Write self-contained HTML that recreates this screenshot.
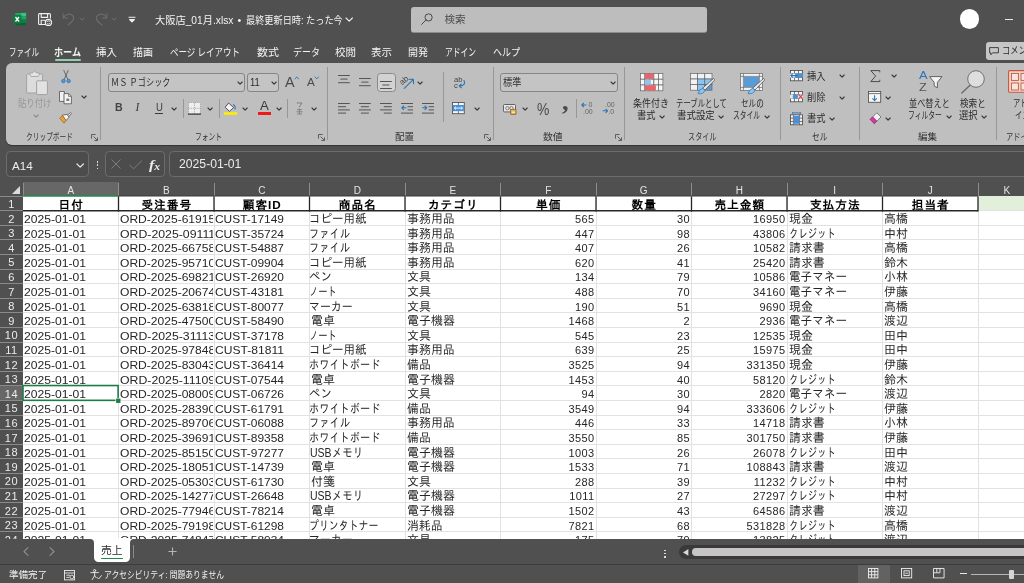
<!DOCTYPE html>
<html lang="ja"><head><meta charset="utf-8"><title>大阪店_01月.xlsx - Excel</title>
<style>
*{margin:0;padding:0;box-sizing:border-box}
html,body{width:1024px;height:583px;overflow:hidden;background:#505050;}
body{position:relative;background:transparent;will-change:transform;font-family:"Liberation Sans","Noto Sans CJK JP",sans-serif;font-size:10px;color:#f0f0f0;}
.a{position:absolute;white-space:nowrap}
.t{position:absolute;white-space:nowrap;line-height:1}
svg{position:absolute;overflow:visible}
.rib{left:6px;top:63px;width:1030px;height:82px;background:#bfbfbf;border-radius:6px 0 0 6px;box-shadow:0 1px 1px #333}
.rl{color:#3c3c3c;font-size:9.5px}
.rt{color:#2e2e2e;font-size:9.5px}
.gs{width:1px;background:#979797;top:67px;height:73px}
.ss{width:1px;background:#979797;top:99px;height:19px}
.box{border:1px solid #868686;border-radius:3px;background:#c4c4c4}
.cell{position:absolute;white-space:nowrap;overflow:hidden;font-family:"Liberation Sans","IPAGothic",sans-serif;font-size:11px;color:#262626;line-height:14.6px;height:14.6px}
.hd{font-weight:bold;text-align:center;font-size:11.7px;color:#000}
.num{text-align:right}
.rh{position:absolute;left:0;width:23px;text-align:center;color:#ececec;font-family:"Liberation Sans","IPAGothic",sans-serif;font-size:11px;line-height:14.6px;height:14.6px;letter-spacing:.6px}
.ch{position:absolute;top:182px;height:14px;text-align:center;color:#e4e4e4;font-size:10px;line-height:17px}
</style></head>
<body>
<svg style="left:13px;top:12px" width="14" height="14" viewBox="0 0 14 14">
<rect x="2.2" y="0.9" width="10.9" height="12.8" rx="0.9" fill="#21a366"/>
<rect x="8.1" y="0.9" width="5" height="3.2" fill="#33c481"/>
<rect x="8.1" y="4.1" width="5" height="3.2" fill="#21a366"/>
<rect x="8.1" y="7.3" width="5" height="3.2" fill="#107c41"/>
<path d="M2.2 10.5 H13.1 V12.8 Q13.1 13.7 12.2 13.7 H3.1 Q2.2 13.7 2.2 12.8 Z" fill="#185c37"/>
<rect x="2.2" y="4.1" width="5.9" height="6.4" fill="#107c41"/>
<rect x="0.1" y="3" width="8.3" height="8.5" rx="0.8" fill="#107c41"/>
<path d="M2.5 5 L6 9.5 M6 5 L2.5 9.5" stroke="#fff" stroke-width="1.25" fill="none"/>
</svg>
<svg style="left:38px;top:13px" width="14" height="13" viewBox="0 0 14 13" fill="none" stroke="#f2f2f2" stroke-width="1.1">
<path d="M8 11.5 H1.6 Q0.6 11.5 0.6 10.5 V1.6 Q0.6 0.6 1.6 0.6 H11.4 Q12.4 0.6 12.4 1.6 V5.5"/>
<path d="M3.2 0.6 V4.4 H9.6 V0.6"/>
<path d="M3.2 11.5 V7.2 H7"/>
<circle cx="10.4" cy="9.4" r="3.1" stroke-width="1.2" fill="#505050"/>
<path d="M8.9 9.2 A1.6 1.6 0 0 1 11.8 8.6 M11.9 9.8 A1.6 1.6 0 0 1 9 10.3" stroke-width="0.9"/>
</svg>
<svg style="left:62px;top:12px" width="14" height="14" viewBox="0 0 14 14" fill="none" stroke="#6e6e6e" stroke-width="1.05" stroke-linecap="round" stroke-linejoin="round">
<path d="M1.2 1.5 V6 H5.7"/><path d="M1.4 5.8 C3.5 2 8 1 10.6 3.6 C13.4 6.6 10.5 9.5 6 13"/>
</svg>
<svg style="left:79.90px;top:18.10px" width="4.2" height="2.2"><path d="M0 0 L2.1 2.2 L4.2 0" fill="none" stroke="#6e6e6e" stroke-width="1" stroke-linecap="round" stroke-linejoin="round"/></svg>
<svg style="left:94px;top:12px" width="14" height="14" viewBox="0 0 14 14" fill="none" stroke="#6e6e6e" stroke-width="1.05" stroke-linecap="round" stroke-linejoin="round">
<path d="M12.8 1.5 V6 H8.3"/><path d="M12.6 5.8 C10.5 2 6 1 3.4 3.6 C0.6 6.6 3.5 9.5 8 13"/>
</svg>
<svg style="left:111.70px;top:18.10px" width="4.2" height="2.2"><path d="M0 0 L2.1 2.2 L4.2 0" fill="none" stroke="#6e6e6e" stroke-width="1" stroke-linecap="round" stroke-linejoin="round"/></svg>
<svg style="left:128px;top:16px" width="8" height="7" viewBox="0 0 8 7" fill="none" stroke="#f0f0f0" stroke-width="1.1" stroke-linecap="round" stroke-linejoin="round"><path d="M1 1.2 H7"/><path d="M1.6 3.6 L4 5.8 L6.4 3.6 Z" fill="#f0f0f0"/></svg>
<div class="t " style="left:155px;top:14.50px;font-size:10.6px;color:#f4f4f4;transform:scaleX(0.9649);transform-origin:0 50%;">大阪店_01月.xlsx</div>
<div class="t " style="left:237.6px;top:14.55px;font-size:10.5px;color:#f4f4f4;">•</div>
<div class="t " style="left:246px;top:14.50px;font-size:10.6px;color:#f4f4f4;transform:scaleX(0.8656);transform-origin:0 50%;">最終更新日時: たった今</div>
<svg style="left:345.80px;top:18.40px" width="6.4" height="3.2"><path d="M0 0 L3.2 3.2 L6.4 0" fill="none" stroke="#f0f0f0" stroke-width="1.1" stroke-linecap="round" stroke-linejoin="round"/></svg>
<div class="a" style="left:410.5px;top:6.5px;width:296.5px;height:26px;background:#bdbdbd;border-radius:3px;border-bottom:1px solid #8c8c8c"></div>
<svg style="left:421px;top:13px" width="12" height="12" viewBox="0 0 12 12" fill="none" stroke="#4a4a4a" stroke-width="1"><circle cx="7.6" cy="4.4" r="3.6"/><path d="M5 7 L0.6 11.4" stroke-linecap="round"/></svg>
<div class="t " style="left:444.5px;top:14.35px;font-size:10.5px;color:#4c4c4c;">検索</div>
<div class="a" style="left:959.7px;top:9.3px;width:19.6px;height:19.6px;border-radius:50%;background:#fff"></div>
<div class="a" style="left:1004.5px;top:18.5px;width:8px;height:1.2px;background:#e8e8e8"></div>
<div class="t " style="left:9px;top:46.85px;font-size:10.7px;color:#f4f4f4;transform:scaleX(0.7015);transform-origin:0 50%;">ファイル</div>
<div class="t " style="left:54px;top:46.85px;font-size:10.7px;color:#f4f4f4;font-weight:bold;transform:scaleX(0.8504);transform-origin:0 50%;">ホーム</div>
<div class="t " style="left:96px;top:46.85px;font-size:10.7px;color:#f4f4f4;transform:scaleX(0.9817);transform-origin:0 50%;">挿入</div>
<div class="t " style="left:133px;top:46.85px;font-size:10.7px;color:#f4f4f4;transform:scaleX(0.9350);transform-origin:0 50%;">描画</div>
<div class="t " style="left:170px;top:46.85px;font-size:10.7px;color:#f4f4f4;transform:scaleX(0.7931);transform-origin:0 50%;">ページ レイアウト</div>
<div class="t " style="left:257px;top:46.85px;font-size:10.7px;color:#f4f4f4;transform:scaleX(1.0285);transform-origin:0 50%;">数式</div>
<div class="t " style="left:293px;top:46.85px;font-size:10.7px;color:#f4f4f4;transform:scaleX(0.8417);transform-origin:0 50%;">データ</div>
<div class="t " style="left:335px;top:46.85px;font-size:10.7px;color:#f4f4f4;transform:scaleX(0.9817);transform-origin:0 50%;">校閲</div>
<div class="t " style="left:371px;top:46.85px;font-size:10.7px;color:#f4f4f4;transform:scaleX(0.9817);transform-origin:0 50%;">表示</div>
<div class="t " style="left:408px;top:46.85px;font-size:10.7px;color:#f4f4f4;transform:scaleX(0.9350);transform-origin:0 50%;">開発</div>
<div class="t " style="left:445px;top:46.85px;font-size:10.7px;color:#f4f4f4;transform:scaleX(0.7249);transform-origin:0 50%;">アドイン</div>
<div class="t " style="left:493px;top:46.85px;font-size:10.7px;color:#f4f4f4;transform:scaleX(0.8417);transform-origin:0 50%;">ヘルプ</div>
<div class="a" style="left:54.5px;top:58.8px;width:26.5px;height:1.8px;background:#8fd0ae;border-radius:1px"></div>
<div class="a" style="left:985.5px;top:42px;width:50px;height:18px;background:#c6c6c6;border-radius:3px"></div>
<svg style="left:989px;top:46.6px" width="10" height="8.5" viewBox="0 0 10 8.5" fill="none" stroke="#333" stroke-width="0.9" stroke-linejoin="round"><path d="M0.6 0.6 H9.4 V5.8 H3.6 L1.8 7.8 V5.8 H0.6 Z"/></svg>
<div class="t " style="left:1001.5px;top:46.20px;font-size:10px;color:#2a2a2a;transform:scaleX(0.8250);transform-origin:0 50%;">コメント</div>
<div class="a rib"></div>
<svg style="left:26px;top:70.5px" width="22" height="24" viewBox="0 0 22 24" ><rect x="0.6" y="3" width="16" height="19" rx="1" fill="#dcdcdc" stroke="#a2a2a2" stroke-width="1"/>
<path d="M3.8 3.2 V2 H6.6 L8.6 0.3 L10.6 2 H13.4 V3.2 L12.2 5.4 H5 Z" fill="#e8e8e8" stroke="#a2a2a2" stroke-width="0.9" stroke-linejoin="round"/>
<rect x="10.6" y="9.8" width="10.8" height="13.8" rx="0.6" fill="#e2e2e2" stroke="#a2a2a2" stroke-width="1"/></svg>
<div class="t " style="left:18.2px;top:99.00px;font-size:10.4px;color:#979797;transform:scaleX(0.8036);transform-origin:0 50%;">貼り付け</div>
<svg style="left:33.90px;top:114.95px" width="4.2" height="2.1"><path d="M0 0 L2.1 2.1 L4.2 0" fill="none" stroke="#8c8c8c" stroke-width="1.1" stroke-linecap="round" stroke-linejoin="round"/></svg>
<svg style="left:61px;top:70px" width="10" height="13.5" viewBox="0 0 10 13.5" ><path d="M2.8 0.4 L6.8 9.4 M7.2 0.4 L3.2 9.4" stroke="#5a5a5a" stroke-width="0.85" fill="none" stroke-linecap="round"/>
<circle cx="2.4" cy="11" r="1.7" fill="#5b9bd5" stroke="#2e75b6" stroke-width="0.9"/><circle cx="7.6" cy="11" r="1.7" fill="#5b9bd5" stroke="#2e75b6" stroke-width="0.9"/></svg>
<svg style="left:59.4px;top:90.8px" width="13" height="13.4" viewBox="0 0 13 13.4" ><path d="M0.5 0.5 H5.4 V10.4 H0.5 Z" fill="#f2f2f2" stroke="#505050" stroke-width="0.8"/>
<path d="M5 2.6 H9.8 L12.4 5.2 V12.8 H5 Z" fill="#f2f2f2" stroke="#505050" stroke-width="0.8" stroke-linejoin="round"/><path d="M9.6 2.8 V5.4 H12.2" fill="none" stroke="#505050" stroke-width="0.7"/>
<rect x="7.4" y="7.6" width="2.8" height="2.4" fill="#777"/></svg>
<svg style="left:82.40px;top:96.15px" width="4.2" height="2.1"><path d="M0 0 L2.1 2.1 L4.2 0" fill="none" stroke="#383838" stroke-width="1.15" stroke-linecap="round" stroke-linejoin="round"/></svg>
<svg style="left:59.4px;top:111.6px" width="13" height="12" viewBox="0 0 13 12" ><path d="M8.2 3.2 L11.6 0.6 L12.4 1.6 L9.6 4.8 Z" fill="#f0f0f0" stroke="#555" stroke-width="0.8"/>
<path d="M3.2 3.2 L8.2 2.4 L10 5.2 L7 8.6 Z" fill="#f4f4f4" stroke="#555" stroke-width="0.8" stroke-linejoin="round"/>
<path d="M0.8 6.4 L3.4 3.6 L7 8.4 L5 11.2 Z" fill="#e8a33a" stroke="#a0691c" stroke-width="0.8" stroke-linejoin="round"/></svg>
<div class="t " style="left:25.5px;top:131.80px;font-size:9.6px;color:#333;transform:scaleX(0.6999);transform-origin:0 50%;">クリップボード</div>
<svg style="left:91px;top:133.8px" width="7" height="7" viewBox="0 0 7 7" ><path d="M0.5 4.6 V0.5 H4.6 M2.6 2.6 L6.2 6.2 M6.5 3.4 V6.5 H3.4" fill="none" stroke="#4a4a4a" stroke-width="0.85"/></svg>
<div class="a gs" style="left:100.3px"></div>
<div class="a box" style="left:107.5px;top:73.4px;width:137px;height:18.8px"></div>
<div class="t " style="left:110.8px;top:77.70px;font-size:9.8px;color:#2a2a2a;transform:scaleX(0.8344);transform-origin:0 50%;">ＭＳ Ｐゴシック</div>
<svg style="left:238.10px;top:81.85px" width="4.2" height="2.1"><path d="M0 0 L2.1 2.1 L4.2 0" fill="none" stroke="#383838" stroke-width="1.15" stroke-linecap="round" stroke-linejoin="round"/></svg>
<div class="a box" style="left:247.4px;top:73.4px;width:31.2px;height:18.8px"></div>
<div class="t " style="left:250.4px;top:77.45px;font-size:10.5px;color:#2a2a2a;transform:scaleX(0.8986);transform-origin:0 50%;">11</div>
<svg style="left:271.80px;top:81.85px" width="4.2" height="2.1"><path d="M0 0 L2.1 2.1 L4.2 0" fill="none" stroke="#383838" stroke-width="1.15" stroke-linecap="round" stroke-linejoin="round"/></svg>
<div class="t " style="left:284.6px;top:74.80px;font-size:14px;color:#4a4a4a;transform:scaleX(1.0274);transform-origin:0 50%;">A</div>
<svg style="left:294.50px;top:77.30px" width="3.6" height="1.8"><path d="M0 1.8 L1.8 0 L3.6 1.8" fill="none" stroke="#2e75b6" stroke-width="1" stroke-linecap="round" stroke-linejoin="round"/></svg>
<div class="t " style="left:307.2px;top:77.05px;font-size:11.5px;color:#4a4a4a;transform:scaleX(1.0167);transform-origin:0 50%;">A</div>
<svg style="left:314.80px;top:77.30px" width="3.6" height="1.8"><path d="M0 0 L1.8 1.8 L3.6 0" fill="none" stroke="#2e75b6" stroke-width="1" stroke-linecap="round" stroke-linejoin="round"/></svg>
<div class="t " style="left:114.9px;top:102.30px;font-size:10.6px;color:#444;font-weight:bold;">B</div>
<div class="t " style="left:135.6px;top:101.85px;font-size:11.5px;color:#3a3a3a;font-style:italic;font-family:'Liberation Serif',serif;">I</div>
<div class="t " style="left:155.6px;top:101.65px;font-size:11.5px;color:#3a3a3a;transform:scaleX(0.8301);transform-origin:0 50%;">U</div>
<div class="a" style="left:155.4px;top:113px;width:7.3px;height:1px;background:#3a3a3a"></div>
<svg style="left:172.20px;top:107.95px" width="4.2" height="2.1"><path d="M0 0 L2.1 2.1 L4.2 0" fill="none" stroke="#383838" stroke-width="1.15" stroke-linecap="round" stroke-linejoin="round"/></svg>
<div class="a ss" style="left:183.2px;top:99.4px;height:18.6px"></div>
<svg style="left:188.3px;top:101.6px" width="13" height="12.6" viewBox="0 0 13 12.6" ><rect x="0.5" y="0.5" width="12" height="11.6" fill="#eee" stroke="#999" stroke-width="0.8" stroke-dasharray="1.2 1"/>
<path d="M6.5 0.5 V12.1 M0.5 6.3 H12.5" stroke="#999" stroke-width="0.8" stroke-dasharray="1.2 1"/><path d="M0 12.1 H13" stroke="#333" stroke-width="1.2"/></svg>
<svg style="left:207.70px;top:107.95px" width="4.2" height="2.1"><path d="M0 0 L2.1 2.1 L4.2 0" fill="none" stroke="#383838" stroke-width="1.15" stroke-linecap="round" stroke-linejoin="round"/></svg>
<div class="a ss" style="left:218.8px;top:99.4px;height:18.6px"></div>
<svg style="left:224.4px;top:102px" width="13.2" height="13" viewBox="0 0 13.2 13" ><path d="M4.6 1 L9.6 5.6 L5.4 9.4 L1.2 5.2 Z" fill="#f4f4f4" stroke="#444" stroke-width="0.9" stroke-linejoin="round"/>
<path d="M9.2 2.6 Q11.8 4 11 7.6" fill="none" stroke="#2e75b6" stroke-width="1.1"/>
<rect x="0" y="10.2" width="13.2" height="2.6" fill="#ffee00"/></svg>
<svg style="left:243.40px;top:107.95px" width="4.2" height="2.1"><path d="M0 0 L2.1 2.1 L4.2 0" fill="none" stroke="#383838" stroke-width="1.15" stroke-linecap="round" stroke-linejoin="round"/></svg>
<div class="t " style="left:260px;top:100.40px;font-size:12px;color:#3a3a3a;transform:scaleX(1.0979);transform-origin:0 50%;">A</div>
<div class="a" style="left:257.5px;top:112.2px;width:13.2px;height:2.6px;background:#f01818"></div>
<svg style="left:276.60px;top:107.95px" width="4.2" height="2.1"><path d="M0 0 L2.1 2.1 L4.2 0" fill="none" stroke="#383838" stroke-width="1.15" stroke-linecap="round" stroke-linejoin="round"/></svg>
<div class="a ss" style="left:287.3px;top:99.4px;height:18.6px"></div>
<svg style="left:296px;top:102.4px" width="7" height="12.6" viewBox="0 0 7 12.6" ><path d="M0.8 1 H6 L3 5.4" fill="none" stroke="#777" stroke-width="0.9"/><path d="M1 7.6 H6 M0.4 9.8 H6.6 M1 12 H6 M3.5 6.6 V12" fill="none" stroke="#777" stroke-width="0.8"/></svg>
<svg style="left:312.20px;top:107.95px" width="4.2" height="2.1"><path d="M0 0 L2.1 2.1 L4.2 0" fill="none" stroke="#383838" stroke-width="1.15" stroke-linecap="round" stroke-linejoin="round"/></svg>
<div class="t " style="left:194.5px;top:131.80px;font-size:9.6px;color:#333;transform:scaleX(0.7036);transform-origin:0 50%;">フォント</div>
<svg style="left:318px;top:133.8px" width="7" height="7" viewBox="0 0 7 7" ><path d="M0.5 4.6 V0.5 H4.6 M2.6 2.6 L6.2 6.2 M6.5 3.4 V6.5 H3.4" fill="none" stroke="#4a4a4a" stroke-width="0.85"/></svg>
<div class="a gs" style="left:327.4px"></div>
<svg style="left:338px;top:75.4px" width="11.8" height="10.8" viewBox="0 0 11.8 10.8" ><rect x="0.00" y="0.00" width="11.8" height="1" fill="#555"/><rect x="2.30" y="3.60" width="7.2" height="1" fill="#555"/><rect x="0.00" y="7.20" width="11.8" height="1" fill="#555"/></svg>
<svg style="left:359px;top:78px" width="11.8" height="10.8" viewBox="0 0 11.8 10.8" ><rect x="0.00" y="0.00" width="11.8" height="1" fill="#555"/><rect x="2.30" y="3.60" width="7.2" height="1" fill="#555"/><rect x="0.00" y="7.20" width="11.8" height="1" fill="#555"/></svg>
<div class="a box" style="left:376.6px;top:73px;width:19.2px;height:19.2px;background:#d2d2d2;border-color:#8a8a8a;border-radius:3.5px"></div>
<svg style="left:380.3px;top:81.4px" width="11.8" height="10.5" viewBox="0 0 11.8 10.5" ><rect x="0.00" y="0.00" width="11.8" height="1" fill="#555"/><rect x="2.30" y="3.50" width="7.2" height="1" fill="#555"/><rect x="0.00" y="7.00" width="11.8" height="1" fill="#555"/></svg>
<svg style="left:400.4px;top:75.6px" width="14.4" height="13.4" viewBox="0 0 14.4 13.4" ><text x="0" y="0" font-size="8.4" fill="#4a4a4a" font-family="Liberation Sans,sans-serif" transform="translate(2.2,9.6) rotate(-42)">ab</text>
<path d="M4.2 12.4 L13.2 3.6 M9 3.2 L13.4 3.4 L13.6 7.8" fill="none" stroke="#2e75b6" stroke-width="1.1" stroke-linecap="round" stroke-linejoin="round"/></svg>
<svg style="left:418.40px;top:81.85px" width="4.2" height="2.1"><path d="M0 0 L2.1 2.1 L4.2 0" fill="none" stroke="#383838" stroke-width="1.15" stroke-linecap="round" stroke-linejoin="round"/></svg>
<svg style="left:338px;top:102.7px" width="11.8" height="12.8" viewBox="0 0 11.8 12.8" ><rect x="0.00" y="0.00" width="11.8" height="1" fill="#555"/><rect x="0.00" y="3.20" width="8" height="1" fill="#555"/><rect x="0.00" y="6.40" width="11.8" height="1" fill="#555"/><rect x="0.00" y="9.60" width="8" height="1" fill="#555"/></svg>
<svg style="left:359px;top:102.7px" width="11.8" height="12.8" viewBox="0 0 11.8 12.8" ><rect x="0.00" y="0.00" width="11.8" height="1" fill="#555"/><rect x="1.90" y="3.20" width="8" height="1" fill="#555"/><rect x="0.00" y="6.40" width="11.8" height="1" fill="#555"/><rect x="1.90" y="9.60" width="8" height="1" fill="#555"/></svg>
<svg style="left:380.3px;top:102.7px" width="11.8" height="12.8" viewBox="0 0 11.8 12.8" ><rect x="0.00" y="0.00" width="11.8" height="1" fill="#555"/><rect x="3.80" y="3.20" width="8" height="1" fill="#555"/><rect x="0.00" y="6.40" width="11.8" height="1" fill="#555"/><rect x="3.80" y="9.60" width="8" height="1" fill="#555"/></svg>
<svg style="left:401px;top:102.7px" width="12" height="11" viewBox="0 0 12 11" ><rect x="0" y="0" width="12" height="1" fill="#555"/><rect x="6.6" y="3.2" width="5.4" height="1" fill="#555"/><rect x="6.6" y="6.4" width="5.4" height="1" fill="#555"/><rect x="0" y="9.6" width="12" height="1" fill="#555"/><path d="M5 4.8 H0.8 M2.6 3 L0.8 4.8 L2.6 6.6" fill="none" stroke="#2e75b6" stroke-width="1.1" stroke-linejoin="round" stroke-linecap="round"/></svg>
<svg style="left:422px;top:102.7px" width="12" height="11" viewBox="0 0 12 11" ><rect x="0" y="0" width="12" height="1" fill="#555"/><rect x="6.6" y="3.2" width="5.4" height="1" fill="#555"/><rect x="6.6" y="6.4" width="5.4" height="1" fill="#555"/><rect x="0" y="9.6" width="12" height="1" fill="#555"/><path d="M0.6 4.8 H4.8 M3 3 L4.8 4.8 L3 6.6" fill="none" stroke="#2e75b6" stroke-width="1.1" stroke-linejoin="round" stroke-linecap="round"/></svg>
<div class="a" style="left:442.9px;top:72.4px;width:1px;height:49.4px;background:#979797"></div>
<svg style="left:453px;top:76.4px" width="13" height="13.4" viewBox="0 0 13 13.4" ><text x="1" y="6.2" font-size="7.6" fill="#444" font-family="Liberation Sans,sans-serif">ab</text><text x="1" y="12" font-size="7.6" fill="#444" font-family="Liberation Sans,sans-serif">c</text>
<path d="M11 4.4 Q13.4 9.6 6.4 10 M8.2 8.2 L6.2 10 L8.4 11.8" fill="none" stroke="#2e75b6" stroke-width="1.1" stroke-linecap="round" stroke-linejoin="round"/></svg>
<svg style="left:451.6px;top:102px" width="12.8" height="12.2" viewBox="0 0 12.8 12.2" ><rect x="0.5" y="0.5" width="11.8" height="11.2" fill="#f6f6f6" stroke="#555" stroke-width="0.9"/><path d="M6.4 0.5 V3 M6.4 9.2 V11.7" stroke="#555" stroke-width="0.8"/>
<rect x="0.9" y="3" width="11" height="6.2" fill="#4a90d9"/><path d="M2.4 6.1 H10.4 M4 4.6 L2.4 6.1 L4 7.6 M8.8 4.6 L10.4 6.1 L8.8 7.6" fill="none" stroke="#fff" stroke-width="0.9"/></svg>
<svg style="left:475.10px;top:107.95px" width="4.2" height="2.1"><path d="M0 0 L2.1 2.1 L4.2 0" fill="none" stroke="#383838" stroke-width="1.15" stroke-linecap="round" stroke-linejoin="round"/></svg>
<div class="t " style="left:394.5px;top:131.80px;font-size:9.6px;color:#333;transform:scaleX(0.9902);transform-origin:0 50%;">配置</div>
<svg style="left:484px;top:133.8px" width="7" height="7" viewBox="0 0 7 7" ><path d="M0.5 4.6 V0.5 H4.6 M2.6 2.6 L6.2 6.2 M6.5 3.4 V6.5 H3.4" fill="none" stroke="#4a4a4a" stroke-width="0.85"/></svg>
<div class="a gs" style="left:493.4px"></div>
<div class="a box" style="left:500.3px;top:73.4px;width:118.2px;height:18.8px"></div>
<div class="t " style="left:503.3px;top:77.90px;font-size:9.8px;color:#2a2a2a;transform:scaleX(0.9442);transform-origin:0 50%;">標準</div>
<svg style="left:611.00px;top:81.85px" width="4.2" height="2.1"><path d="M0 0 L2.1 2.1 L4.2 0" fill="none" stroke="#383838" stroke-width="1.15" stroke-linecap="round" stroke-linejoin="round"/></svg>
<svg style="left:503.3px;top:104px" width="14" height="11" viewBox="0 0 14 11" ><rect x="0.5" y="0.5" width="12" height="7.4" rx="1" fill="#e8e8e8" stroke="#555" stroke-width="0.9"/><circle cx="4.4" cy="4.2" r="1.7" fill="none" stroke="#666" stroke-width="0.8"/><circle cx="8.4" cy="4.2" r="1.7" fill="none" stroke="#666" stroke-width="0.8"/>
<path d="M7.6 5.4 H13 V10.4 H7.6 Z" fill="#e3b45a" stroke="#8a6420" stroke-width="0.8"/><path d="M8.8 8.2 H11.8" stroke="#fff" stroke-width="1"/></svg>
<svg style="left:522.90px;top:107.95px" width="4.2" height="2.1"><path d="M0 0 L2.1 2.1 L4.2 0" fill="none" stroke="#383838" stroke-width="1.15" stroke-linecap="round" stroke-linejoin="round"/></svg>
<div class="t " style="left:537px;top:101.05px;font-size:16.5px;color:#4a4a4a;transform:scaleX(0.8452);transform-origin:0 50%;">%</div>
<div class="t " style="left:561.6px;top:89.20px;font-size:26px;color:#4a4a4a;font-family:'Liberation Serif',serif;font-weight:bold;transform:scaleX(1.0154);transform-origin:0 50%;">,</div>
<div class="a ss" style="left:575.7px;top:99.4px;height:18.6px"></div>
<svg style="left:580.6px;top:102.4px" width="13.4" height="12.2" viewBox="0 0 13.4 12.2" ><path d="M5.4 3 H0.8 M2.8 1 L0.8 3 L2.8 5" fill="none" stroke="#2e75b6" stroke-width="1.1" stroke-linejoin="round"/><text x="7.6" y="5.4" font-size="7" fill="#666" font-family="Liberation Sans,sans-serif">0</text><text x="2" y="11.6" font-size="7" fill="#666" font-family="Liberation Sans,sans-serif">.00</text></svg>
<svg style="left:601.8px;top:102.4px" width="13.4" height="12.2" viewBox="0 0 13.4 12.2" ><text x="3" y="5.4" font-size="7" fill="#666" font-family="Liberation Sans,sans-serif">.00</text><path d="M0.6 8.8 H5.6 M3.6 6.8 L5.6 8.8 L3.6 10.8" fill="none" stroke="#2e75b6" stroke-width="1.1" stroke-linejoin="round"/><text x="6.4" y="11.6" font-size="7" fill="#666" font-family="Liberation Sans,sans-serif">.0</text></svg>
<div class="t " style="left:543px;top:131.80px;font-size:9.6px;color:#333;transform:scaleX(1.0215);transform-origin:0 50%;">数値</div>
<svg style="left:615.3px;top:133.8px" width="7" height="7" viewBox="0 0 7 7" ><path d="M0.5 4.6 V0.5 H4.6 M2.6 2.6 L6.2 6.2 M6.5 3.4 V6.5 H3.4" fill="none" stroke="#4a4a4a" stroke-width="0.85"/></svg>
<div class="a gs" style="left:624.3px"></div>
<svg style="left:640.2px;top:73px" width="23.4" height="18.2" viewBox="0 0 23.4 18.2" ><rect x="0.4" y="0.4" width="4.5" height="5.8" fill="#f6f6f6" stroke="#666" stroke-width="0.7"/><rect x="4.9" y="0.4" width="4.5" height="5.8" fill="#f6f6f6" stroke="#666" stroke-width="0.7"/><rect x="9.4" y="0.4" width="4.5" height="5.8" fill="#f6f6f6" stroke="#666" stroke-width="0.7"/><rect x="13.9" y="0.4" width="4.5" height="5.8" fill="#f6f6f6" stroke="#666" stroke-width="0.7"/><rect x="18.4" y="0.4" width="4.5" height="5.8" fill="#f6f6f6" stroke="#666" stroke-width="0.7"/><rect x="0.4" y="6.2" width="4.5" height="5.8" fill="#f6f6f6" stroke="#666" stroke-width="0.7"/><rect x="4.9" y="6.2" width="4.5" height="5.8" fill="#f6f6f6" stroke="#666" stroke-width="0.7"/><rect x="9.4" y="6.2" width="4.5" height="5.8" fill="#f6f6f6" stroke="#666" stroke-width="0.7"/><rect x="13.9" y="6.2" width="4.5" height="5.8" fill="#f6f6f6" stroke="#666" stroke-width="0.7"/><rect x="18.4" y="6.2" width="4.5" height="5.8" fill="#f6f6f6" stroke="#666" stroke-width="0.7"/><rect x="0.4" y="12.0" width="4.5" height="5.8" fill="#f6f6f6" stroke="#666" stroke-width="0.7"/><rect x="4.9" y="12.0" width="4.5" height="5.8" fill="#f6f6f6" stroke="#666" stroke-width="0.7"/><rect x="9.4" y="12.0" width="4.5" height="5.8" fill="#f6f6f6" stroke="#666" stroke-width="0.7"/><rect x="13.9" y="12.0" width="4.5" height="5.8" fill="#f6f6f6" stroke="#666" stroke-width="0.7"/><rect x="18.4" y="12.0" width="4.5" height="5.8" fill="#f6f6f6" stroke="#666" stroke-width="0.7"/><rect x="4.9" y="0.7" width="8.6" height="5.2" fill="#e8636a"/><rect x="4.9" y="6.5" width="6" height="5.2" fill="#8ec4f0"/><rect x="4.9" y="12.3" width="11" height="5.2" fill="#e8636a"/></svg>
<div class="t " style="left:633.3px;top:98.70px;font-size:9.8px;color:#2a2a2a;transform:scaleX(0.9187);transform-origin:0 50%;">条件付き</div>
<div class="t " style="left:637.2px;top:110.90px;font-size:9.8px;color:#2a2a2a;transform:scaleX(0.9442);transform-origin:0 50%;">書式</div>
<svg style="left:660.40px;top:115.75px" width="4.2" height="2.1"><path d="M0 0 L2.1 2.1 L4.2 0" fill="none" stroke="#383838" stroke-width="1.15" stroke-linecap="round" stroke-linejoin="round"/></svg>
<svg style="left:689.6px;top:73px" width="25" height="22" viewBox="0 0 25 22" ><rect x="0.4" y="0.4" width="7.2" height="5.6" fill="#f2f2f2" stroke="#666" stroke-width="0.7"/><rect x="7.6" y="0.4" width="7.2" height="5.6" fill="#f2f2f2" stroke="#666" stroke-width="0.7"/><rect x="14.8" y="0.4" width="7.2" height="5.6" fill="#f2f2f2" stroke="#666" stroke-width="0.7"/><rect x="0.4" y="6.0" width="7.2" height="5.6" fill="#f2f2f2" stroke="#666" stroke-width="0.7"/><rect x="7.6" y="6.0" width="7.2" height="5.6" fill="#8ec4f0" stroke="#666" stroke-width="0.7"/><rect x="14.8" y="6.0" width="7.2" height="5.6" fill="#8ec4f0" stroke="#666" stroke-width="0.7"/><rect x="0.4" y="11.6" width="7.2" height="5.6" fill="#f2f2f2" stroke="#666" stroke-width="0.7"/><rect x="7.6" y="11.6" width="7.2" height="5.6" fill="#8ec4f0" stroke="#666" stroke-width="0.7"/><rect x="14.8" y="11.6" width="7.2" height="5.6" fill="#5b9bd5" stroke="#666" stroke-width="0.7"/><path d="M23.6 5.4 Q25 6.2 24.2 7.6 L15 17 L12.6 15.2 Z" fill="#e8e8e8" stroke="#555" stroke-width="0.8" stroke-linejoin="round"/><path d="M12.6 15.4 Q9.4 16 8 20.6 Q13.4 21.6 15 17.2 Z" fill="#8ec4f0" stroke="#3a78b8" stroke-width="0.8" stroke-linejoin="round"/></svg>
<div class="t " style="left:675.5px;top:98.70px;font-size:9.8px;color:#2a2a2a;transform:scaleX(0.7533);transform-origin:0 50%;">テーブルとして</div>
<div class="t " style="left:677.4px;top:110.90px;font-size:9.8px;color:#2a2a2a;transform:scaleX(0.9646);transform-origin:0 50%;">書式設定</div>
<svg style="left:718.90px;top:115.75px" width="4.2" height="2.1"><path d="M0 0 L2.1 2.1 L4.2 0" fill="none" stroke="#383838" stroke-width="1.15" stroke-linecap="round" stroke-linejoin="round"/></svg>
<svg style="left:740.2px;top:73px" width="25" height="22" viewBox="0 0 25 22" ><rect x="0.4" y="0.4" width="22" height="17" fill="#f2f2f2" stroke="#666" stroke-width="0.7"/><path d="M3.4 0.4 V17.4 M19.4 0.4 V17.4 M0.4 3.4 H22.4 M0.4 14.4 H22.4" stroke="#666" stroke-width="0.7"/><rect x="3.8" y="3.8" width="15.2" height="10.2" fill="#5b9bd5"/><path d="M23.6 5.4 Q25 6.2 24.2 7.6 L15 17 L12.6 15.2 Z" fill="#e8e8e8" stroke="#555" stroke-width="0.8" stroke-linejoin="round"/><path d="M12.6 15.4 Q9.4 16 8 20.6 Q13.4 21.6 15 17.2 Z" fill="#8ec4f0" stroke="#3a78b8" stroke-width="0.8" stroke-linejoin="round"/></svg>
<div class="t " style="left:740.7px;top:98.70px;font-size:9.8px;color:#2a2a2a;transform:scaleX(0.7758);transform-origin:0 50%;">セルの</div>
<div class="t " style="left:732.6px;top:110.90px;font-size:9.8px;color:#2a2a2a;transform:scaleX(0.6890);transform-origin:0 50%;">スタイル</div>
<svg style="left:765.40px;top:115.75px" width="4.2" height="2.1"><path d="M0 0 L2.1 2.1 L4.2 0" fill="none" stroke="#383838" stroke-width="1.15" stroke-linecap="round" stroke-linejoin="round"/></svg>
<div class="t " style="left:688.2px;top:131.80px;font-size:9.6px;color:#333;transform:scaleX(0.7427);transform-origin:0 50%;">スタイル</div>
<div class="a gs" style="left:779.8px"></div>
<svg style="left:790px;top:70px" width="13.2" height="13.4" viewBox="0 0 13.2 13.4" ><rect x="0.4" y="0.4" width="12.2" height="10.399999999999999" fill="#f6f6f6" stroke="#444" stroke-width="0.8"/><path d="M4.47 0.4 V10.799999999999999" stroke="#444" stroke-width="0.7"/><path d="M8.53 0.4 V10.799999999999999" stroke="#444" stroke-width="0.7"/><path d="M0.4 3.87 H12.6" stroke="#444" stroke-width="0.7"/><path d="M0.4 7.33 H12.6" stroke="#444" stroke-width="0.7"/><rect x="5" y="3.6" width="8" height="4" fill="#4a90d9"/><rect x="0" y="3.6" width="5" height="4" fill="#f6f6f6"/><path d="M8 5.6 H0.8 M2.8 3.6 L0.8 5.6 L2.8 7.6" fill="none" stroke="#2e75b6" stroke-width="1.1"/></svg>
<div class="t " style="left:806.6px;top:71.50px;font-size:9.8px;color:#2a2a2a;transform:scaleX(0.9493);transform-origin:0 50%;">挿入</div>
<svg style="left:840.20px;top:75.35px" width="4.2" height="2.1"><path d="M0 0 L2.1 2.1 L4.2 0" fill="none" stroke="#383838" stroke-width="1.15" stroke-linecap="round" stroke-linejoin="round"/></svg>
<svg style="left:790px;top:91.4px" width="13.2" height="13.4" viewBox="0 0 13.2 13.4" ><rect x="0.4" y="0.4" width="12.2" height="10.399999999999999" fill="#f6f6f6" stroke="#444" stroke-width="0.8"/><path d="M4.47 0.4 V10.799999999999999" stroke="#444" stroke-width="0.7"/><path d="M8.53 0.4 V10.799999999999999" stroke="#444" stroke-width="0.7"/><path d="M0.4 3.87 H12.6" stroke="#444" stroke-width="0.7"/><path d="M0.4 7.33 H12.6" stroke="#444" stroke-width="0.7"/><rect x="0" y="3.6" width="13" height="4" fill="#e4e4e4"/><rect x="3.2" y="3.6" width="4.4" height="4" fill="#4a90d9" stroke="#2e75b6" stroke-width="0.6" stroke-dasharray="1 0.8"/><path d="M8.8 3.6 L12.6 7.6 M12.6 3.6 L8.8 7.6" stroke="#e0393e" stroke-width="1.1"/></svg>
<div class="t " style="left:806.6px;top:92.70px;font-size:9.8px;color:#2a2a2a;transform:scaleX(0.9493);transform-origin:0 50%;">削除</div>
<svg style="left:840.20px;top:96.55px" width="4.2" height="2.1"><path d="M0 0 L2.1 2.1 L4.2 0" fill="none" stroke="#383838" stroke-width="1.15" stroke-linecap="round" stroke-linejoin="round"/></svg>
<svg style="left:790px;top:111.6px" width="13.2" height="13.4" viewBox="0 0 13.2 13.4" ><path d="M2.6 0.9 H10.4 M2.6 0 V1.8 M10.4 0 V1.8" stroke="#2e75b6" stroke-width="0.9" fill="none"/><rect x="0.4" y="2.8" width="12.2" height="10" fill="#f6f6f6" stroke="#444" stroke-width="0.8"/><path d="M3.4 2.8 V12.8 M9.6 2.8 V12.8 M0.4 6.1 H3.4 M0.4 9.5 H3.4 M9.6 6.1 H12.6 M9.6 9.5 H12.6" stroke="#444" stroke-width="0.7"/><rect x="3.8" y="3.8" width="5.4" height="8" fill="#4a90d9"/></svg>
<div class="t " style="left:806.6px;top:113.50px;font-size:9.8px;color:#2a2a2a;transform:scaleX(0.9493);transform-origin:0 50%;">書式</div>
<svg style="left:829.60px;top:117.55px" width="4.2" height="2.1"><path d="M0 0 L2.1 2.1 L4.2 0" fill="none" stroke="#383838" stroke-width="1.15" stroke-linecap="round" stroke-linejoin="round"/></svg>
<div class="t " style="left:811.6px;top:131.80px;font-size:9.6px;color:#333;transform:scaleX(0.8130);transform-origin:0 50%;">セル</div>
<div class="a gs" style="left:858.5px"></div>
<svg style="left:870px;top:70px" width="10.6" height="12.2" viewBox="0 0 10.6 12.2" ><path d="M9.8 2.4 V0.6 H0.8 L5.6 6.1 L0.8 11.6 H9.8 V9.8" fill="none" stroke="#4a4a4a" stroke-width="1" stroke-linejoin="round"/></svg>
<svg style="left:891.90px;top:75.35px" width="4.2" height="2.1"><path d="M0 0 L2.1 2.1 L4.2 0" fill="none" stroke="#383838" stroke-width="1.15" stroke-linecap="round" stroke-linejoin="round"/></svg>
<svg style="left:868.4px;top:91.3px" width="13.2" height="11.8" viewBox="0 0 13.2 11.8" ><rect x="0.5" y="0.5" width="12.2" height="10.8" fill="#f6f6f6" stroke="#555" stroke-width="0.9"/><path d="M0.5 2.6 H12.7" stroke="#555" stroke-width="0.8"/><path d="M6.6 4.2 V9.4 M4.4 7.4 L6.6 9.6 L8.8 7.4" fill="none" stroke="#2e75b6" stroke-width="1.1"/></svg>
<svg style="left:886.30px;top:96.55px" width="4.2" height="2.1"><path d="M0 0 L2.1 2.1 L4.2 0" fill="none" stroke="#383838" stroke-width="1.15" stroke-linecap="round" stroke-linejoin="round"/></svg>
<svg style="left:868.8px;top:112px" width="12.6" height="12.2" viewBox="0 0 12.6 12.2" ><path d="M7.8 0.8 L12 5 L5.4 11.6 L1.2 7.4 Z" fill="#f4f4f4" stroke="#666" stroke-width="0.8" stroke-linejoin="round"/><path d="M3.7 4.9 L7.9 9.1 L5.4 11.6 L1.2 7.4 Z" fill="#d63aa0" stroke="#a0207a" stroke-width="0.8" stroke-linejoin="round"/></svg>
<svg style="left:886.30px;top:117.55px" width="4.2" height="2.1"><path d="M0 0 L2.1 2.1 L4.2 0" fill="none" stroke="#383838" stroke-width="1.15" stroke-linecap="round" stroke-linejoin="round"/></svg>
<div class="t " style="left:918.6px;top:70.25px;font-size:11.5px;color:#2e75b6;transform:scaleX(1.1210);transform-origin:0 50%;">A</div>
<div class="t " style="left:918.8px;top:81.85px;font-size:11.5px;color:#555;transform:scaleX(1.1093);transform-origin:0 50%;">Z</div>
<svg style="left:928.6px;top:76px" width="13.6" height="12.8" viewBox="0 0 13.6 12.8" ><path d="M0.6 0.6 H13 L8.4 6.4 V11.8 L5.2 10 V6.4 Z" fill="#f4f4f4" stroke="#555" stroke-width="0.9" stroke-linejoin="round"/></svg>
<div class="t " style="left:909.1px;top:98.70px;font-size:9.8px;color:#2a2a2a;transform:scaleX(0.8329);transform-origin:0 50%;">並べ替えと</div>
<div class="t " style="left:907.9px;top:110.90px;font-size:9.8px;color:#2a2a2a;transform:scaleX(0.6927);transform-origin:0 50%;">フィルター</div>
<svg style="left:947.40px;top:115.75px" width="4.2" height="2.1"><path d="M0 0 L2.1 2.1 L4.2 0" fill="none" stroke="#383838" stroke-width="1.15" stroke-linecap="round" stroke-linejoin="round"/></svg>
<svg style="left:960.6px;top:70.4px" width="24" height="24" viewBox="0 0 24 24" ><path d="M9 15.2 L0.8 23" stroke="#666" stroke-width="1.2" stroke-linecap="round"/><circle cx="15" cy="9" r="8.3" fill="#dedede" stroke="#666" stroke-width="0.9"/></svg>
<div class="t " style="left:960.1px;top:98.70px;font-size:9.8px;color:#2a2a2a;transform:scaleX(0.8778);transform-origin:0 50%;">検索と</div>
<div class="t " style="left:958.8px;top:110.90px;font-size:9.8px;color:#2a2a2a;transform:scaleX(0.9493);transform-origin:0 50%;">選択</div>
<svg style="left:982.40px;top:115.75px" width="4.2" height="2.1"><path d="M0 0 L2.1 2.1 L4.2 0" fill="none" stroke="#383838" stroke-width="1.15" stroke-linecap="round" stroke-linejoin="round"/></svg>
<div class="t " style="left:917.9px;top:131.80px;font-size:9.6px;color:#333;transform:scaleX(0.9902);transform-origin:0 50%;">編集</div>
<div class="a gs" style="left:995.7px"></div>
<svg style="left:1008.4px;top:70px" width="24" height="23" viewBox="0 0 24 23" ><rect x="0.6" y="0.6" width="22" height="21.6" rx="1" fill="#f0d8d0" stroke="#c8553a" stroke-width="1.1"/><rect x="3.4" y="3.4" width="7" height="7" fill="#f6e6e0" stroke="#c8553a" stroke-width="0.9"/><rect x="13" y="3.4" width="7" height="7" fill="#f6e6e0" stroke="#c8553a" stroke-width="0.9"/><rect x="3.4" y="13" width="7" height="7" fill="#f6e6e0" stroke="#c8553a" stroke-width="0.9"/><rect x="13" y="13" width="7" height="7" fill="#f6e6e0" stroke="#c8553a" stroke-width="0.9"/></svg>
<div class="t " style="left:1012.6px;top:98.70px;font-size:9.8px;color:#2a2a2a;transform:scaleX(0.7400);transform-origin:0 50%;">アド</div>
<div class="t " style="left:1014.6px;top:110.90px;font-size:9.8px;color:#2a2a2a;transform:scaleX(0.7400);transform-origin:0 50%;">イン</div>
<div class="t " style="left:1006px;top:131.80px;font-size:9.6px;color:#333;transform:scaleX(0.7557);transform-origin:0 50%;">アドイン</div>
<div class="a" style="left:6px;top:151.4px;width:83px;height:25.2px;border:1px solid #6c6c6c;border-radius:4px;background:#4c4c4c"></div>
<div class="t " style="left:12.4px;top:159.80px;font-size:11.6px;color:#ececec;transform:scaleX(1.0077);transform-origin:0 50%;">A14</div>
<svg style="left:77.00px;top:164.40px" width="6.4" height="3.2"><path d="M0 0 L3.2 3.2 L6.4 0" fill="none" stroke="#e8e8e8" stroke-width="1.2" stroke-linecap="round" stroke-linejoin="round"/></svg>
<div class="a" style="left:96.6px;top:161px;width:1.6px;height:1.6px;background:#dcdcdc"></div>
<div class="a" style="left:96.6px;top:164.4px;width:1.6px;height:1.6px;background:#dcdcdc"></div>
<div class="a" style="left:96.6px;top:167.8px;width:1.6px;height:1.6px;background:#dcdcdc"></div>
<div class="a" style="left:105.2px;top:151.4px;width:59.5px;height:25.2px;border:1px solid #6c6c6c;border-radius:4px;background:#4c4c4c"></div>
<svg style="left:110.8px;top:159.4px" width="10" height="10" viewBox="0 0 10 10"><path d="M0.5 0.5 L9.5 9.5 M9.5 0.5 L0.5 9.5" stroke="#7c7c7c" stroke-width="1" fill="none"/></svg>
<svg style="left:128.6px;top:159.6px" width="13.4" height="9.4" viewBox="0 0 13.4 9.4"><path d="M0.5 5 L4.6 8.8 L12.9 0.6" stroke="#7c7c7c" stroke-width="1" fill="none"/></svg>
<div class="t " style="left:149.4px;top:157.70px;font-size:13px;color:#ececec;font-family:'Liberation Serif',serif;font-style:italic;font-weight:bold;transform:scaleX(1.2316);transform-origin:0 50%;"><i>f</i><span style="font-size:9.5px;position:relative;top:1.5px">x</span></div>
<div class="a" style="left:168.5px;top:151.4px;width:870px;height:25.2px;border:1px solid #6c6c6c;border-radius:4px;background:#4c4c4c"></div>
<div class="t " style="left:179.3px;top:157.90px;font-size:12.2px;color:#ececec;transform:scaleX(1.0009);transform-origin:0 50%;">2025-01-01</div>
<div class="a" style="left:0;top:182px;width:1024px;height:14.6px;background:#505050"></div>
<div class="a" style="left:23px;top:182px;width:95.5px;height:14.6px;background:#676767"></div>
<svg style="left:12.2px;top:186px" width="8" height="8" viewBox="0 0 8 8"><path d="M8 0 V8 H0 Z" fill="#dcdcdc"/></svg>
<div class="ch" style="left:23.0px;width:95.5px">A</div>
<div class="ch" style="left:118.5px;width:95.5px">B</div>
<div class="ch" style="left:214.0px;width:95.5px">C</div>
<div class="ch" style="left:309.5px;width:95.5px">D</div>
<div class="ch" style="left:405.0px;width:95.5px">E</div>
<div class="ch" style="left:500.5px;width:95.5px">F</div>
<div class="ch" style="left:596.0px;width:95.5px">G</div>
<div class="ch" style="left:691.5px;width:95.5px">H</div>
<div class="ch" style="left:787.0px;width:95.5px">I</div>
<div class="ch" style="left:882.5px;width:95.5px">J</div>
<div class="ch" style="left:978.0px;width:57.6px">K</div>
<div class="a" style="left:22.5px;top:183px;width:1px;height:13px;background:#8e8e8e"></div>
<div class="a" style="left:118.0px;top:183px;width:1px;height:13px;background:#8e8e8e"></div>
<div class="a" style="left:213.5px;top:183px;width:1px;height:13px;background:#8e8e8e"></div>
<div class="a" style="left:309.0px;top:183px;width:1px;height:13px;background:#8e8e8e"></div>
<div class="a" style="left:404.5px;top:183px;width:1px;height:13px;background:#8e8e8e"></div>
<div class="a" style="left:500.0px;top:183px;width:1px;height:13px;background:#8e8e8e"></div>
<div class="a" style="left:595.5px;top:183px;width:1px;height:13px;background:#8e8e8e"></div>
<div class="a" style="left:691.0px;top:183px;width:1px;height:13px;background:#8e8e8e"></div>
<div class="a" style="left:786.5px;top:183px;width:1px;height:13px;background:#8e8e8e"></div>
<div class="a" style="left:882.0px;top:183px;width:1px;height:13px;background:#8e8e8e"></div>
<div class="a" style="left:977.5px;top:183px;width:1px;height:13px;background:#8e8e8e"></div>
<div class="a" style="left:1073.0px;top:183px;width:1px;height:13px;background:#8e8e8e"></div>
<div class="a" style="left:23px;top:196.1px;width:1010px;height:342.9px;background:#fff"></div>
<div class="a" style="left:978.0px;top:196.1px;width:60px;height:14.595px;background:#e2efda"></div>
<div class="a" style="left:23px;top:210.19px;width:1010px;height:1px;background:#e2e2e2"></div>
<div class="a" style="left:23px;top:224.79px;width:1010px;height:1px;background:#e2e2e2"></div>
<div class="a" style="left:23px;top:239.38px;width:1010px;height:1px;background:#e2e2e2"></div>
<div class="a" style="left:23px;top:253.98px;width:1010px;height:1px;background:#e2e2e2"></div>
<div class="a" style="left:23px;top:268.57px;width:1010px;height:1px;background:#e2e2e2"></div>
<div class="a" style="left:23px;top:283.17px;width:1010px;height:1px;background:#e2e2e2"></div>
<div class="a" style="left:23px;top:297.76px;width:1010px;height:1px;background:#e2e2e2"></div>
<div class="a" style="left:23px;top:312.36px;width:1010px;height:1px;background:#e2e2e2"></div>
<div class="a" style="left:23px;top:326.96px;width:1010px;height:1px;background:#e2e2e2"></div>
<div class="a" style="left:23px;top:341.55px;width:1010px;height:1px;background:#e2e2e2"></div>
<div class="a" style="left:23px;top:356.14px;width:1010px;height:1px;background:#e2e2e2"></div>
<div class="a" style="left:23px;top:370.74px;width:1010px;height:1px;background:#e2e2e2"></div>
<div class="a" style="left:23px;top:385.34px;width:1010px;height:1px;background:#e2e2e2"></div>
<div class="a" style="left:23px;top:399.93px;width:1010px;height:1px;background:#e2e2e2"></div>
<div class="a" style="left:23px;top:414.52px;width:1010px;height:1px;background:#e2e2e2"></div>
<div class="a" style="left:23px;top:429.12px;width:1010px;height:1px;background:#e2e2e2"></div>
<div class="a" style="left:23px;top:443.72px;width:1010px;height:1px;background:#e2e2e2"></div>
<div class="a" style="left:23px;top:458.31px;width:1010px;height:1px;background:#e2e2e2"></div>
<div class="a" style="left:23px;top:472.90px;width:1010px;height:1px;background:#e2e2e2"></div>
<div class="a" style="left:23px;top:487.50px;width:1010px;height:1px;background:#e2e2e2"></div>
<div class="a" style="left:23px;top:502.10px;width:1010px;height:1px;background:#e2e2e2"></div>
<div class="a" style="left:23px;top:516.69px;width:1010px;height:1px;background:#e2e2e2"></div>
<div class="a" style="left:23px;top:531.28px;width:1010px;height:1px;background:#e2e2e2"></div>
<div class="a" style="left:23px;top:545.88px;width:1010px;height:1px;background:#e2e2e2"></div>
<div class="a" style="left:118.0px;top:196.1px;width:1px;height:342.9px;background:#e2e2e2"></div>
<div class="a" style="left:213.5px;top:196.1px;width:1px;height:342.9px;background:#e2e2e2"></div>
<div class="a" style="left:309.0px;top:196.1px;width:1px;height:342.9px;background:#e2e2e2"></div>
<div class="a" style="left:404.5px;top:196.1px;width:1px;height:342.9px;background:#e2e2e2"></div>
<div class="a" style="left:500.0px;top:196.1px;width:1px;height:342.9px;background:#e2e2e2"></div>
<div class="a" style="left:595.5px;top:196.1px;width:1px;height:342.9px;background:#e2e2e2"></div>
<div class="a" style="left:691.0px;top:196.1px;width:1px;height:342.9px;background:#e2e2e2"></div>
<div class="a" style="left:786.5px;top:196.1px;width:1px;height:342.9px;background:#e2e2e2"></div>
<div class="a" style="left:882.0px;top:196.1px;width:1px;height:342.9px;background:#e2e2e2"></div>
<div class="a" style="left:977.5px;top:196.1px;width:1px;height:342.9px;background:#e2e2e2"></div>
<div class="a" style="left:0;top:196.1px;width:23px;height:342.9px;background:#505050"></div>
<div class="a" style="left:0;top:385.84px;width:23px;height:14.595px;background:#676767"></div>
<div class="a" style="left:0;top:195.60px;width:23px;height:1px;background:#8a8a8a"></div>
<div class="rh" style="top:197.00px">1</div>
<div class="a" style="left:0;top:210.19px;width:23px;height:1px;background:#8a8a8a"></div>
<div class="rh" style="top:211.59px">2</div>
<div class="a" style="left:0;top:224.79px;width:23px;height:1px;background:#8a8a8a"></div>
<div class="rh" style="top:226.19px">3</div>
<div class="a" style="left:0;top:239.38px;width:23px;height:1px;background:#8a8a8a"></div>
<div class="rh" style="top:240.78px">4</div>
<div class="a" style="left:0;top:253.98px;width:23px;height:1px;background:#8a8a8a"></div>
<div class="rh" style="top:255.38px">5</div>
<div class="a" style="left:0;top:268.57px;width:23px;height:1px;background:#8a8a8a"></div>
<div class="rh" style="top:269.97px">6</div>
<div class="a" style="left:0;top:283.17px;width:23px;height:1px;background:#8a8a8a"></div>
<div class="rh" style="top:284.57px">7</div>
<div class="a" style="left:0;top:297.76px;width:23px;height:1px;background:#8a8a8a"></div>
<div class="rh" style="top:299.16px">8</div>
<div class="a" style="left:0;top:312.36px;width:23px;height:1px;background:#8a8a8a"></div>
<div class="rh" style="top:313.76px">9</div>
<div class="a" style="left:0;top:326.96px;width:23px;height:1px;background:#8a8a8a"></div>
<div class="rh" style="top:328.36px">10</div>
<div class="a" style="left:0;top:341.55px;width:23px;height:1px;background:#8a8a8a"></div>
<div class="rh" style="top:342.95px">11</div>
<div class="a" style="left:0;top:356.14px;width:23px;height:1px;background:#8a8a8a"></div>
<div class="rh" style="top:357.54px">12</div>
<div class="a" style="left:0;top:370.74px;width:23px;height:1px;background:#8a8a8a"></div>
<div class="rh" style="top:372.14px">13</div>
<div class="a" style="left:0;top:385.34px;width:23px;height:1px;background:#8a8a8a"></div>
<div class="rh" style="top:386.74px">14</div>
<div class="a" style="left:0;top:399.93px;width:23px;height:1px;background:#8a8a8a"></div>
<div class="rh" style="top:401.33px">15</div>
<div class="a" style="left:0;top:414.52px;width:23px;height:1px;background:#8a8a8a"></div>
<div class="rh" style="top:415.92px">16</div>
<div class="a" style="left:0;top:429.12px;width:23px;height:1px;background:#8a8a8a"></div>
<div class="rh" style="top:430.52px">17</div>
<div class="a" style="left:0;top:443.72px;width:23px;height:1px;background:#8a8a8a"></div>
<div class="rh" style="top:445.12px">18</div>
<div class="a" style="left:0;top:458.31px;width:23px;height:1px;background:#8a8a8a"></div>
<div class="rh" style="top:459.71px">19</div>
<div class="a" style="left:0;top:472.90px;width:23px;height:1px;background:#8a8a8a"></div>
<div class="rh" style="top:474.30px">20</div>
<div class="a" style="left:0;top:487.50px;width:23px;height:1px;background:#8a8a8a"></div>
<div class="rh" style="top:488.90px">21</div>
<div class="a" style="left:0;top:502.10px;width:23px;height:1px;background:#8a8a8a"></div>
<div class="rh" style="top:503.50px">22</div>
<div class="a" style="left:0;top:516.69px;width:23px;height:1px;background:#8a8a8a"></div>
<div class="rh" style="top:518.09px">23</div>
<div class="a" style="left:0;top:531.28px;width:23px;height:1px;background:#8a8a8a"></div>
<div class="rh" style="top:532.68px">24</div>
<div class="a" style="left:0;top:545.88px;width:23px;height:1px;background:#8a8a8a"></div>
<svg style="left:0;top:190px" width="130" height="10" viewBox="0 0 130 10"><path d="M23 5.95 H118.5" stroke="#1f8a4c" stroke-width="1.5" fill="none"/></svg>
<div class="cell hd" style="left:23.0px;top:197.80px;width:95.5px;letter-spacing:1px;padding-left:1px">日付</div>
<div class="cell hd" style="left:118.5px;top:197.80px;width:95.5px;letter-spacing:1px;padding-left:1px">受注番号</div>
<div class="cell hd" style="left:214.0px;top:197.80px;width:95.5px;letter-spacing:1px;padding-left:1px">顧客ID</div>
<div class="cell hd" style="left:309.5px;top:197.80px;width:95.5px;letter-spacing:1px;padding-left:1px">商品名</div>
<div class="cell hd" style="left:405.0px;top:197.80px;width:95.5px;letter-spacing:1px;padding-left:1px">カテゴリ</div>
<div class="cell hd" style="left:500.5px;top:197.80px;width:95.5px;letter-spacing:1px;padding-left:1px">単価</div>
<div class="cell hd" style="left:596.0px;top:197.80px;width:95.5px;letter-spacing:1px;padding-left:1px">数量</div>
<div class="cell hd" style="left:691.5px;top:197.80px;width:95.5px;letter-spacing:1px;padding-left:1px">売上金額</div>
<div class="cell hd" style="left:787.0px;top:197.80px;width:95.5px;letter-spacing:1px;padding-left:1px">支払方法</div>
<div class="cell hd" style="left:882.5px;top:197.80px;width:95.5px;letter-spacing:1px;padding-left:1px">担当者</div>
<svg style="left:0;top:0" width="1024" height="230" viewBox="0 0 1024 230"><path d="M23 210.84 H978.0" stroke="#262626" stroke-width="1.5" fill="none"/><path d="M118.5 196.30 V211.59" stroke="#262626" stroke-width="1.3" fill="none"/><path d="M214.0 196.30 V211.59" stroke="#262626" stroke-width="1.3" fill="none"/><path d="M309.5 196.30 V211.59" stroke="#262626" stroke-width="1.3" fill="none"/><path d="M405.0 196.30 V211.59" stroke="#262626" stroke-width="1.3" fill="none"/><path d="M500.5 196.30 V211.59" stroke="#262626" stroke-width="1.3" fill="none"/><path d="M596.0 196.30 V211.59" stroke="#262626" stroke-width="1.3" fill="none"/><path d="M691.5 196.30 V211.59" stroke="#262626" stroke-width="1.3" fill="none"/><path d="M787.0 196.30 V211.59" stroke="#262626" stroke-width="1.3" fill="none"/><path d="M882.5 196.30 V211.59" stroke="#262626" stroke-width="1.3" fill="none"/><path d="M978.0 196.30 V211.59" stroke="#262626" stroke-width="1.3" fill="none"/><path d="M118.5 196.00 H978.0" stroke="#3a3a3a" stroke-width="1" fill="none"/></svg>
<div class="cell" style="left:24.4px;top:212.09px;width:93.6px;font-size:11px;"><span style="display:inline-block;transform:scaleX(1.1016);transform-origin:0 50%;">2025-01-01</span></div>
<div class="cell" style="left:119.9px;top:212.09px;width:93.6px;font-size:11px;"><span style="display:inline-block;transform:scaleX(1.0962);transform-origin:0 50%;">ORD-2025-61915</span></div>
<div class="cell" style="left:215.4px;top:212.09px;width:93.6px;font-size:11px;"><span style="display:inline-block;transform:scaleX(1.0850);transform-origin:0 50%;">CUST-17149</span></div>
<div class="cell" style="left:309.4px;top:212.09px;width:95.1px;font-size:12.4px;"><span style="display:inline-block;transform:scaleX(0.9297);transform-origin:0 50%;">コピー用紙</span></div>
<div class="cell" style="left:406.7px;top:212.09px;width:93.3px;font-size:12.4px;"><span style="display:inline-block;transform:scaleX(0.9644);transform-origin:0 50%;">事務用品</span></div>
<div class="cell num" style="left:500.5px;top:212.09px;width:93.9px;letter-spacing:0.38px">565</div>
<div class="cell num" style="left:596.0px;top:212.09px;width:93.9px;letter-spacing:0.38px">30</div>
<div class="cell num" style="left:691.5px;top:212.09px;width:93.9px;letter-spacing:0.38px">16950</div>
<div class="cell" style="left:788.7px;top:212.09px;width:93.3px;font-size:12.4px;"><span style="display:inline-block;transform:scaleX(0.9685);transform-origin:0 50%;">現金</span></div>
<div class="cell" style="left:884.2px;top:212.09px;width:93.3px;font-size:12.4px;"><span style="display:inline-block;transform:scaleX(0.9685);transform-origin:0 50%;">高橋</span></div>
<div class="cell" style="left:24.4px;top:226.69px;width:93.6px;font-size:11px;"><span style="display:inline-block;transform:scaleX(1.1016);transform-origin:0 50%;">2025-01-01</span></div>
<div class="cell" style="left:119.9px;top:226.69px;width:93.6px;font-size:11px;"><span style="display:inline-block;transform:scaleX(1.1173);transform-origin:0 50%;">ORD-2025-09111</span></div>
<div class="cell" style="left:215.4px;top:226.69px;width:93.6px;font-size:11px;"><span style="display:inline-block;transform:scaleX(1.0850);transform-origin:0 50%;">CUST-35724</span></div>
<div class="cell" style="left:309.4px;top:226.69px;width:95.1px;font-size:12.4px;"><span style="display:inline-block;transform:scaleX(0.8313);transform-origin:0 50%;">ファイル</span></div>
<div class="cell" style="left:406.7px;top:226.69px;width:93.3px;font-size:12.4px;"><span style="display:inline-block;transform:scaleX(0.9644);transform-origin:0 50%;">事務用品</span></div>
<div class="cell num" style="left:500.5px;top:226.69px;width:93.9px;letter-spacing:0.38px">447</div>
<div class="cell num" style="left:596.0px;top:226.69px;width:93.9px;letter-spacing:0.38px">98</div>
<div class="cell num" style="left:691.5px;top:226.69px;width:93.9px;letter-spacing:0.38px">43806</div>
<div class="cell" style="left:789.1px;top:226.69px;width:92.9px;font-size:12.4px;"><span style="display:inline-block;transform:scaleX(0.7586);transform-origin:0 50%;">クレジット</span></div>
<div class="cell" style="left:884.2px;top:226.69px;width:93.3px;font-size:12.4px;"><span style="display:inline-block;transform:scaleX(0.9685);transform-origin:0 50%;">中村</span></div>
<div class="cell" style="left:24.4px;top:241.28px;width:93.6px;font-size:11px;"><span style="display:inline-block;transform:scaleX(1.1016);transform-origin:0 50%;">2025-01-01</span></div>
<div class="cell" style="left:119.9px;top:241.28px;width:93.6px;font-size:11px;"><span style="display:inline-block;transform:scaleX(1.0962);transform-origin:0 50%;">ORD-2025-66758</span></div>
<div class="cell" style="left:215.4px;top:241.28px;width:93.6px;font-size:11px;"><span style="display:inline-block;transform:scaleX(1.0850);transform-origin:0 50%;">CUST-54887</span></div>
<div class="cell" style="left:309.4px;top:241.28px;width:95.1px;font-size:12.4px;"><span style="display:inline-block;transform:scaleX(0.8313);transform-origin:0 50%;">ファイル</span></div>
<div class="cell" style="left:406.7px;top:241.28px;width:93.3px;font-size:12.4px;"><span style="display:inline-block;transform:scaleX(0.9644);transform-origin:0 50%;">事務用品</span></div>
<div class="cell num" style="left:500.5px;top:241.28px;width:93.9px;letter-spacing:0.38px">407</div>
<div class="cell num" style="left:596.0px;top:241.28px;width:93.9px;letter-spacing:0.38px">26</div>
<div class="cell num" style="left:691.5px;top:241.28px;width:93.9px;letter-spacing:0.38px">10582</div>
<div class="cell" style="left:788.7px;top:241.28px;width:93.3px;font-size:12.4px;"><span style="display:inline-block;transform:scaleX(0.9631);transform-origin:0 50%;">請求書</span></div>
<div class="cell" style="left:884.2px;top:241.28px;width:93.3px;font-size:12.4px;"><span style="display:inline-block;transform:scaleX(0.9685);transform-origin:0 50%;">高橋</span></div>
<div class="cell" style="left:24.4px;top:255.88px;width:93.6px;font-size:11px;"><span style="display:inline-block;transform:scaleX(1.1016);transform-origin:0 50%;">2025-01-01</span></div>
<div class="cell" style="left:119.9px;top:255.88px;width:93.6px;font-size:11px;"><span style="display:inline-block;transform:scaleX(1.0962);transform-origin:0 50%;">ORD-2025-95710</span></div>
<div class="cell" style="left:215.4px;top:255.88px;width:93.6px;font-size:11px;"><span style="display:inline-block;transform:scaleX(1.0850);transform-origin:0 50%;">CUST-09904</span></div>
<div class="cell" style="left:309.4px;top:255.88px;width:95.1px;font-size:12.4px;"><span style="display:inline-block;transform:scaleX(0.9297);transform-origin:0 50%;">コピー用紙</span></div>
<div class="cell" style="left:406.7px;top:255.88px;width:93.3px;font-size:12.4px;"><span style="display:inline-block;transform:scaleX(0.9644);transform-origin:0 50%;">事務用品</span></div>
<div class="cell num" style="left:500.5px;top:255.88px;width:93.9px;letter-spacing:0.38px">620</div>
<div class="cell num" style="left:596.0px;top:255.88px;width:93.9px;letter-spacing:0.38px">41</div>
<div class="cell num" style="left:691.5px;top:255.88px;width:93.9px;letter-spacing:0.38px">25420</div>
<div class="cell" style="left:788.7px;top:255.88px;width:93.3px;font-size:12.4px;"><span style="display:inline-block;transform:scaleX(0.9631);transform-origin:0 50%;">請求書</span></div>
<div class="cell" style="left:884.2px;top:255.88px;width:93.3px;font-size:12.4px;"><span style="display:inline-block;transform:scaleX(0.9685);transform-origin:0 50%;">鈴木</span></div>
<div class="cell" style="left:24.4px;top:270.47px;width:93.6px;font-size:11px;"><span style="display:inline-block;transform:scaleX(1.1016);transform-origin:0 50%;">2025-01-01</span></div>
<div class="cell" style="left:119.9px;top:270.47px;width:93.6px;font-size:11px;"><span style="display:inline-block;transform:scaleX(1.0962);transform-origin:0 50%;">ORD-2025-69821</span></div>
<div class="cell" style="left:215.4px;top:270.47px;width:93.6px;font-size:11px;"><span style="display:inline-block;transform:scaleX(1.0850);transform-origin:0 50%;">CUST-26920</span></div>
<div class="cell" style="left:309.4px;top:270.47px;width:95.1px;font-size:12.4px;"><span style="display:inline-block;transform:scaleX(0.9281);transform-origin:0 50%;">ペン</span></div>
<div class="cell" style="left:406.7px;top:270.47px;width:93.3px;font-size:12.4px;"><span style="display:inline-block;transform:scaleX(0.9685);transform-origin:0 50%;">文具</span></div>
<div class="cell num" style="left:500.5px;top:270.47px;width:93.9px;letter-spacing:0.38px">134</div>
<div class="cell num" style="left:596.0px;top:270.47px;width:93.9px;letter-spacing:0.38px">79</div>
<div class="cell num" style="left:691.5px;top:270.47px;width:93.9px;letter-spacing:0.38px">10586</div>
<div class="cell" style="left:788.7px;top:270.47px;width:93.3px;font-size:12.4px;"><span style="display:inline-block;transform:scaleX(0.9362);transform-origin:0 50%;">電子マネー</span></div>
<div class="cell" style="left:884.2px;top:270.47px;width:93.3px;font-size:12.4px;"><span style="display:inline-block;transform:scaleX(0.9685);transform-origin:0 50%;">小林</span></div>
<div class="cell" style="left:24.4px;top:285.07px;width:93.6px;font-size:11px;"><span style="display:inline-block;transform:scaleX(1.1016);transform-origin:0 50%;">2025-01-01</span></div>
<div class="cell" style="left:119.9px;top:285.07px;width:93.6px;font-size:11px;"><span style="display:inline-block;transform:scaleX(1.0962);transform-origin:0 50%;">ORD-2025-20674</span></div>
<div class="cell" style="left:215.4px;top:285.07px;width:93.6px;font-size:11px;"><span style="display:inline-block;transform:scaleX(1.0850);transform-origin:0 50%;">CUST-43181</span></div>
<div class="cell" style="left:309.4px;top:285.07px;width:95.1px;font-size:12.4px;"><span style="display:inline-block;transform:scaleX(0.7506);transform-origin:0 50%;">ノート</span></div>
<div class="cell" style="left:406.7px;top:285.07px;width:93.3px;font-size:12.4px;"><span style="display:inline-block;transform:scaleX(0.9685);transform-origin:0 50%;">文具</span></div>
<div class="cell num" style="left:500.5px;top:285.07px;width:93.9px;letter-spacing:0.38px">488</div>
<div class="cell num" style="left:596.0px;top:285.07px;width:93.9px;letter-spacing:0.38px">70</div>
<div class="cell num" style="left:691.5px;top:285.07px;width:93.9px;letter-spacing:0.38px">34160</div>
<div class="cell" style="left:788.7px;top:285.07px;width:93.3px;font-size:12.4px;"><span style="display:inline-block;transform:scaleX(0.9362);transform-origin:0 50%;">電子マネー</span></div>
<div class="cell" style="left:884.2px;top:285.07px;width:93.3px;font-size:12.4px;"><span style="display:inline-block;transform:scaleX(0.9685);transform-origin:0 50%;">伊藤</span></div>
<div class="cell" style="left:24.4px;top:299.66px;width:93.6px;font-size:11px;"><span style="display:inline-block;transform:scaleX(1.1016);transform-origin:0 50%;">2025-01-01</span></div>
<div class="cell" style="left:119.9px;top:299.66px;width:93.6px;font-size:11px;"><span style="display:inline-block;transform:scaleX(1.0962);transform-origin:0 50%;">ORD-2025-63818</span></div>
<div class="cell" style="left:215.4px;top:299.66px;width:93.6px;font-size:11px;"><span style="display:inline-block;transform:scaleX(1.0850);transform-origin:0 50%;">CUST-80077</span></div>
<div class="cell" style="left:309.4px;top:299.66px;width:95.1px;font-size:12.4px;"><span style="display:inline-block;transform:scaleX(0.8817);transform-origin:0 50%;">マーカー</span></div>
<div class="cell" style="left:406.7px;top:299.66px;width:93.3px;font-size:12.4px;"><span style="display:inline-block;transform:scaleX(0.9685);transform-origin:0 50%;">文具</span></div>
<div class="cell num" style="left:500.5px;top:299.66px;width:93.9px;letter-spacing:0.38px">190</div>
<div class="cell num" style="left:596.0px;top:299.66px;width:93.9px;letter-spacing:0.38px">51</div>
<div class="cell num" style="left:691.5px;top:299.66px;width:93.9px;letter-spacing:0.38px">9690</div>
<div class="cell" style="left:788.7px;top:299.66px;width:93.3px;font-size:12.4px;"><span style="display:inline-block;transform:scaleX(0.9685);transform-origin:0 50%;">現金</span></div>
<div class="cell" style="left:884.2px;top:299.66px;width:93.3px;font-size:12.4px;"><span style="display:inline-block;transform:scaleX(0.9685);transform-origin:0 50%;">高橋</span></div>
<div class="cell" style="left:24.4px;top:314.26px;width:93.6px;font-size:11px;"><span style="display:inline-block;transform:scaleX(1.1016);transform-origin:0 50%;">2025-01-01</span></div>
<div class="cell" style="left:119.9px;top:314.26px;width:93.6px;font-size:11px;"><span style="display:inline-block;transform:scaleX(1.0962);transform-origin:0 50%;">ORD-2025-47500</span></div>
<div class="cell" style="left:215.4px;top:314.26px;width:93.6px;font-size:11px;"><span style="display:inline-block;transform:scaleX(1.0850);transform-origin:0 50%;">CUST-58490</span></div>
<div class="cell" style="left:311.2px;top:314.26px;width:93.3px;font-size:12.4px;"><span style="display:inline-block;transform:scaleX(0.9685);transform-origin:0 50%;">電卓</span></div>
<div class="cell" style="left:406.7px;top:314.26px;width:93.3px;font-size:12.4px;"><span style="display:inline-block;transform:scaleX(0.9685);transform-origin:0 50%;">電子機器</span></div>
<div class="cell num" style="left:500.5px;top:314.26px;width:93.9px;letter-spacing:0.38px">1468</div>
<div class="cell num" style="left:596.0px;top:314.26px;width:93.9px;letter-spacing:0.38px">2</div>
<div class="cell num" style="left:691.5px;top:314.26px;width:93.9px;letter-spacing:0.38px">2936</div>
<div class="cell" style="left:788.7px;top:314.26px;width:93.3px;font-size:12.4px;"><span style="display:inline-block;transform:scaleX(0.9362);transform-origin:0 50%;">電子マネー</span></div>
<div class="cell" style="left:884.2px;top:314.26px;width:93.3px;font-size:12.4px;"><span style="display:inline-block;transform:scaleX(0.9685);transform-origin:0 50%;">渡辺</span></div>
<div class="cell" style="left:24.4px;top:328.86px;width:93.6px;font-size:11px;"><span style="display:inline-block;transform:scaleX(1.1016);transform-origin:0 50%;">2025-01-01</span></div>
<div class="cell" style="left:119.9px;top:328.86px;width:93.6px;font-size:11px;"><span style="display:inline-block;transform:scaleX(1.1173);transform-origin:0 50%;">ORD-2025-31113</span></div>
<div class="cell" style="left:215.4px;top:328.86px;width:93.6px;font-size:11px;"><span style="display:inline-block;transform:scaleX(1.0850);transform-origin:0 50%;">CUST-37178</span></div>
<div class="cell" style="left:309.4px;top:328.86px;width:95.1px;font-size:12.4px;"><span style="display:inline-block;transform:scaleX(0.7506);transform-origin:0 50%;">ノート</span></div>
<div class="cell" style="left:406.7px;top:328.86px;width:93.3px;font-size:12.4px;"><span style="display:inline-block;transform:scaleX(0.9685);transform-origin:0 50%;">文具</span></div>
<div class="cell num" style="left:500.5px;top:328.86px;width:93.9px;letter-spacing:0.38px">545</div>
<div class="cell num" style="left:596.0px;top:328.86px;width:93.9px;letter-spacing:0.38px">23</div>
<div class="cell num" style="left:691.5px;top:328.86px;width:93.9px;letter-spacing:0.38px">12535</div>
<div class="cell" style="left:788.7px;top:328.86px;width:93.3px;font-size:12.4px;"><span style="display:inline-block;transform:scaleX(0.9685);transform-origin:0 50%;">現金</span></div>
<div class="cell" style="left:884.2px;top:328.86px;width:93.3px;font-size:12.4px;"><span style="display:inline-block;transform:scaleX(0.9685);transform-origin:0 50%;">田中</span></div>
<div class="cell" style="left:24.4px;top:343.45px;width:93.6px;font-size:11px;"><span style="display:inline-block;transform:scaleX(1.1016);transform-origin:0 50%;">2025-01-01</span></div>
<div class="cell" style="left:119.9px;top:343.45px;width:93.6px;font-size:11px;"><span style="display:inline-block;transform:scaleX(1.0962);transform-origin:0 50%;">ORD-2025-97848</span></div>
<div class="cell" style="left:215.4px;top:343.45px;width:93.6px;font-size:11px;"><span style="display:inline-block;transform:scaleX(1.0991);transform-origin:0 50%;">CUST-81811</span></div>
<div class="cell" style="left:309.4px;top:343.45px;width:95.1px;font-size:12.4px;"><span style="display:inline-block;transform:scaleX(0.9297);transform-origin:0 50%;">コピー用紙</span></div>
<div class="cell" style="left:406.7px;top:343.45px;width:93.3px;font-size:12.4px;"><span style="display:inline-block;transform:scaleX(0.9644);transform-origin:0 50%;">事務用品</span></div>
<div class="cell num" style="left:500.5px;top:343.45px;width:93.9px;letter-spacing:0.38px">639</div>
<div class="cell num" style="left:596.0px;top:343.45px;width:93.9px;letter-spacing:0.38px">25</div>
<div class="cell num" style="left:691.5px;top:343.45px;width:93.9px;letter-spacing:0.38px">15975</div>
<div class="cell" style="left:788.7px;top:343.45px;width:93.3px;font-size:12.4px;"><span style="display:inline-block;transform:scaleX(0.9685);transform-origin:0 50%;">現金</span></div>
<div class="cell" style="left:884.2px;top:343.45px;width:93.3px;font-size:12.4px;"><span style="display:inline-block;transform:scaleX(0.9685);transform-origin:0 50%;">田中</span></div>
<div class="cell" style="left:24.4px;top:358.04px;width:93.6px;font-size:11px;"><span style="display:inline-block;transform:scaleX(1.1016);transform-origin:0 50%;">2025-01-01</span></div>
<div class="cell" style="left:119.9px;top:358.04px;width:93.6px;font-size:11px;"><span style="display:inline-block;transform:scaleX(1.0962);transform-origin:0 50%;">ORD-2025-83043</span></div>
<div class="cell" style="left:215.4px;top:358.04px;width:93.6px;font-size:11px;"><span style="display:inline-block;transform:scaleX(1.0850);transform-origin:0 50%;">CUST-36414</span></div>
<div class="cell" style="left:309.4px;top:358.04px;width:95.1px;font-size:12.4px;"><span style="display:inline-block;transform:scaleX(0.8232);transform-origin:0 50%;">ホワイトボード</span></div>
<div class="cell" style="left:406.7px;top:358.04px;width:93.3px;font-size:12.4px;"><span style="display:inline-block;transform:scaleX(0.9685);transform-origin:0 50%;">備品</span></div>
<div class="cell num" style="left:500.5px;top:358.04px;width:93.9px;letter-spacing:0.38px">3525</div>
<div class="cell num" style="left:596.0px;top:358.04px;width:93.9px;letter-spacing:0.38px">94</div>
<div class="cell num" style="left:691.5px;top:358.04px;width:93.9px;letter-spacing:0.38px">331350</div>
<div class="cell" style="left:788.7px;top:358.04px;width:93.3px;font-size:12.4px;"><span style="display:inline-block;transform:scaleX(0.9685);transform-origin:0 50%;">現金</span></div>
<div class="cell" style="left:884.2px;top:358.04px;width:93.3px;font-size:12.4px;"><span style="display:inline-block;transform:scaleX(0.9685);transform-origin:0 50%;">伊藤</span></div>
<div class="cell" style="left:24.4px;top:372.64px;width:93.6px;font-size:11px;"><span style="display:inline-block;transform:scaleX(1.1016);transform-origin:0 50%;">2025-01-01</span></div>
<div class="cell" style="left:119.9px;top:372.64px;width:93.6px;font-size:11px;"><span style="display:inline-block;transform:scaleX(1.1173);transform-origin:0 50%;">ORD-2025-11109</span></div>
<div class="cell" style="left:215.4px;top:372.64px;width:93.6px;font-size:11px;"><span style="display:inline-block;transform:scaleX(1.0850);transform-origin:0 50%;">CUST-07544</span></div>
<div class="cell" style="left:311.2px;top:372.64px;width:93.3px;font-size:12.4px;"><span style="display:inline-block;transform:scaleX(0.9685);transform-origin:0 50%;">電卓</span></div>
<div class="cell" style="left:406.7px;top:372.64px;width:93.3px;font-size:12.4px;"><span style="display:inline-block;transform:scaleX(0.9685);transform-origin:0 50%;">電子機器</span></div>
<div class="cell num" style="left:500.5px;top:372.64px;width:93.9px;letter-spacing:0.38px">1453</div>
<div class="cell num" style="left:596.0px;top:372.64px;width:93.9px;letter-spacing:0.38px">40</div>
<div class="cell num" style="left:691.5px;top:372.64px;width:93.9px;letter-spacing:0.38px">58120</div>
<div class="cell" style="left:789.1px;top:372.64px;width:92.9px;font-size:12.4px;"><span style="display:inline-block;transform:scaleX(0.7586);transform-origin:0 50%;">クレジット</span></div>
<div class="cell" style="left:884.2px;top:372.64px;width:93.3px;font-size:12.4px;"><span style="display:inline-block;transform:scaleX(0.9685);transform-origin:0 50%;">鈴木</span></div>
<div class="cell" style="left:24.4px;top:387.24px;width:93.6px;font-size:11px;"><span style="display:inline-block;transform:scaleX(1.1016);transform-origin:0 50%;">2025-01-01</span></div>
<div class="cell" style="left:119.9px;top:387.24px;width:93.6px;font-size:11px;"><span style="display:inline-block;transform:scaleX(1.0962);transform-origin:0 50%;">ORD-2025-08009</span></div>
<div class="cell" style="left:215.4px;top:387.24px;width:93.6px;font-size:11px;"><span style="display:inline-block;transform:scaleX(1.0850);transform-origin:0 50%;">CUST-06726</span></div>
<div class="cell" style="left:309.4px;top:387.24px;width:95.1px;font-size:12.4px;"><span style="display:inline-block;transform:scaleX(0.9281);transform-origin:0 50%;">ペン</span></div>
<div class="cell" style="left:406.7px;top:387.24px;width:93.3px;font-size:12.4px;"><span style="display:inline-block;transform:scaleX(0.9685);transform-origin:0 50%;">文具</span></div>
<div class="cell num" style="left:500.5px;top:387.24px;width:93.9px;letter-spacing:0.38px">94</div>
<div class="cell num" style="left:596.0px;top:387.24px;width:93.9px;letter-spacing:0.38px">30</div>
<div class="cell num" style="left:691.5px;top:387.24px;width:93.9px;letter-spacing:0.38px">2820</div>
<div class="cell" style="left:788.7px;top:387.24px;width:93.3px;font-size:12.4px;"><span style="display:inline-block;transform:scaleX(0.9362);transform-origin:0 50%;">電子マネー</span></div>
<div class="cell" style="left:884.2px;top:387.24px;width:93.3px;font-size:12.4px;"><span style="display:inline-block;transform:scaleX(0.9685);transform-origin:0 50%;">渡辺</span></div>
<div class="cell" style="left:24.4px;top:401.83px;width:93.6px;font-size:11px;"><span style="display:inline-block;transform:scaleX(1.1016);transform-origin:0 50%;">2025-01-01</span></div>
<div class="cell" style="left:119.9px;top:401.83px;width:93.6px;font-size:11px;"><span style="display:inline-block;transform:scaleX(1.0962);transform-origin:0 50%;">ORD-2025-28390</span></div>
<div class="cell" style="left:215.4px;top:401.83px;width:93.6px;font-size:11px;"><span style="display:inline-block;transform:scaleX(1.0850);transform-origin:0 50%;">CUST-61791</span></div>
<div class="cell" style="left:309.4px;top:401.83px;width:95.1px;font-size:12.4px;"><span style="display:inline-block;transform:scaleX(0.8232);transform-origin:0 50%;">ホワイトボード</span></div>
<div class="cell" style="left:406.7px;top:401.83px;width:93.3px;font-size:12.4px;"><span style="display:inline-block;transform:scaleX(0.9685);transform-origin:0 50%;">備品</span></div>
<div class="cell num" style="left:500.5px;top:401.83px;width:93.9px;letter-spacing:0.38px">3549</div>
<div class="cell num" style="left:596.0px;top:401.83px;width:93.9px;letter-spacing:0.38px">94</div>
<div class="cell num" style="left:691.5px;top:401.83px;width:93.9px;letter-spacing:0.38px">333606</div>
<div class="cell" style="left:789.1px;top:401.83px;width:92.9px;font-size:12.4px;"><span style="display:inline-block;transform:scaleX(0.7586);transform-origin:0 50%;">クレジット</span></div>
<div class="cell" style="left:884.2px;top:401.83px;width:93.3px;font-size:12.4px;"><span style="display:inline-block;transform:scaleX(0.9685);transform-origin:0 50%;">伊藤</span></div>
<div class="cell" style="left:24.4px;top:416.42px;width:93.6px;font-size:11px;"><span style="display:inline-block;transform:scaleX(1.1016);transform-origin:0 50%;">2025-01-01</span></div>
<div class="cell" style="left:119.9px;top:416.42px;width:93.6px;font-size:11px;"><span style="display:inline-block;transform:scaleX(1.0962);transform-origin:0 50%;">ORD-2025-89706</span></div>
<div class="cell" style="left:215.4px;top:416.42px;width:93.6px;font-size:11px;"><span style="display:inline-block;transform:scaleX(1.0850);transform-origin:0 50%;">CUST-06088</span></div>
<div class="cell" style="left:309.4px;top:416.42px;width:95.1px;font-size:12.4px;"><span style="display:inline-block;transform:scaleX(0.8313);transform-origin:0 50%;">ファイル</span></div>
<div class="cell" style="left:406.7px;top:416.42px;width:93.3px;font-size:12.4px;"><span style="display:inline-block;transform:scaleX(0.9644);transform-origin:0 50%;">事務用品</span></div>
<div class="cell num" style="left:500.5px;top:416.42px;width:93.9px;letter-spacing:0.38px">446</div>
<div class="cell num" style="left:596.0px;top:416.42px;width:93.9px;letter-spacing:0.38px">33</div>
<div class="cell num" style="left:691.5px;top:416.42px;width:93.9px;letter-spacing:0.38px">14718</div>
<div class="cell" style="left:788.7px;top:416.42px;width:93.3px;font-size:12.4px;"><span style="display:inline-block;transform:scaleX(0.9631);transform-origin:0 50%;">請求書</span></div>
<div class="cell" style="left:884.2px;top:416.42px;width:93.3px;font-size:12.4px;"><span style="display:inline-block;transform:scaleX(0.9685);transform-origin:0 50%;">小林</span></div>
<div class="cell" style="left:24.4px;top:431.02px;width:93.6px;font-size:11px;"><span style="display:inline-block;transform:scaleX(1.1016);transform-origin:0 50%;">2025-01-01</span></div>
<div class="cell" style="left:119.9px;top:431.02px;width:93.6px;font-size:11px;"><span style="display:inline-block;transform:scaleX(1.0962);transform-origin:0 50%;">ORD-2025-39691</span></div>
<div class="cell" style="left:215.4px;top:431.02px;width:93.6px;font-size:11px;"><span style="display:inline-block;transform:scaleX(1.0850);transform-origin:0 50%;">CUST-89358</span></div>
<div class="cell" style="left:309.4px;top:431.02px;width:95.1px;font-size:12.4px;"><span style="display:inline-block;transform:scaleX(0.8232);transform-origin:0 50%;">ホワイトボード</span></div>
<div class="cell" style="left:406.7px;top:431.02px;width:93.3px;font-size:12.4px;"><span style="display:inline-block;transform:scaleX(0.9685);transform-origin:0 50%;">備品</span></div>
<div class="cell num" style="left:500.5px;top:431.02px;width:93.9px;letter-spacing:0.38px">3550</div>
<div class="cell num" style="left:596.0px;top:431.02px;width:93.9px;letter-spacing:0.38px">85</div>
<div class="cell num" style="left:691.5px;top:431.02px;width:93.9px;letter-spacing:0.38px">301750</div>
<div class="cell" style="left:788.7px;top:431.02px;width:93.3px;font-size:12.4px;"><span style="display:inline-block;transform:scaleX(0.9631);transform-origin:0 50%;">請求書</span></div>
<div class="cell" style="left:884.2px;top:431.02px;width:93.3px;font-size:12.4px;"><span style="display:inline-block;transform:scaleX(0.9685);transform-origin:0 50%;">伊藤</span></div>
<div class="cell" style="left:24.4px;top:445.62px;width:93.6px;font-size:11px;"><span style="display:inline-block;transform:scaleX(1.1016);transform-origin:0 50%;">2025-01-01</span></div>
<div class="cell" style="left:119.9px;top:445.62px;width:93.6px;font-size:11px;"><span style="display:inline-block;transform:scaleX(1.0962);transform-origin:0 50%;">ORD-2025-85150</span></div>
<div class="cell" style="left:215.4px;top:445.62px;width:93.6px;font-size:11px;"><span style="display:inline-block;transform:scaleX(1.0850);transform-origin:0 50%;">CUST-97277</span></div>
<div class="cell" style="left:310.2px;top:445.62px;width:94.3px;font-size:12.4px;"><span style="display:inline-block;transform:scaleX(0.8491);transform-origin:0 50%;">USBメモリ</span></div>
<div class="cell" style="left:406.7px;top:445.62px;width:93.3px;font-size:12.4px;"><span style="display:inline-block;transform:scaleX(0.9685);transform-origin:0 50%;">電子機器</span></div>
<div class="cell num" style="left:500.5px;top:445.62px;width:93.9px;letter-spacing:0.38px">1003</div>
<div class="cell num" style="left:596.0px;top:445.62px;width:93.9px;letter-spacing:0.38px">26</div>
<div class="cell num" style="left:691.5px;top:445.62px;width:93.9px;letter-spacing:0.38px">26078</div>
<div class="cell" style="left:789.1px;top:445.62px;width:92.9px;font-size:12.4px;"><span style="display:inline-block;transform:scaleX(0.7586);transform-origin:0 50%;">クレジット</span></div>
<div class="cell" style="left:884.2px;top:445.62px;width:93.3px;font-size:12.4px;"><span style="display:inline-block;transform:scaleX(0.9685);transform-origin:0 50%;">田中</span></div>
<div class="cell" style="left:24.4px;top:460.21px;width:93.6px;font-size:11px;"><span style="display:inline-block;transform:scaleX(1.1016);transform-origin:0 50%;">2025-01-01</span></div>
<div class="cell" style="left:119.9px;top:460.21px;width:93.6px;font-size:11px;"><span style="display:inline-block;transform:scaleX(1.0962);transform-origin:0 50%;">ORD-2025-18051</span></div>
<div class="cell" style="left:215.4px;top:460.21px;width:93.6px;font-size:11px;"><span style="display:inline-block;transform:scaleX(1.0850);transform-origin:0 50%;">CUST-14739</span></div>
<div class="cell" style="left:311.2px;top:460.21px;width:93.3px;font-size:12.4px;"><span style="display:inline-block;transform:scaleX(0.9685);transform-origin:0 50%;">電卓</span></div>
<div class="cell" style="left:406.7px;top:460.21px;width:93.3px;font-size:12.4px;"><span style="display:inline-block;transform:scaleX(0.9685);transform-origin:0 50%;">電子機器</span></div>
<div class="cell num" style="left:500.5px;top:460.21px;width:93.9px;letter-spacing:0.38px">1533</div>
<div class="cell num" style="left:596.0px;top:460.21px;width:93.9px;letter-spacing:0.38px">71</div>
<div class="cell num" style="left:691.5px;top:460.21px;width:93.9px;letter-spacing:0.38px">108843</div>
<div class="cell" style="left:788.7px;top:460.21px;width:93.3px;font-size:12.4px;"><span style="display:inline-block;transform:scaleX(0.9631);transform-origin:0 50%;">請求書</span></div>
<div class="cell" style="left:884.2px;top:460.21px;width:93.3px;font-size:12.4px;"><span style="display:inline-block;transform:scaleX(0.9685);transform-origin:0 50%;">渡辺</span></div>
<div class="cell" style="left:24.4px;top:474.80px;width:93.6px;font-size:11px;"><span style="display:inline-block;transform:scaleX(1.1016);transform-origin:0 50%;">2025-01-01</span></div>
<div class="cell" style="left:119.9px;top:474.80px;width:93.6px;font-size:11px;"><span style="display:inline-block;transform:scaleX(1.0962);transform-origin:0 50%;">ORD-2025-05303</span></div>
<div class="cell" style="left:215.4px;top:474.80px;width:93.6px;font-size:11px;"><span style="display:inline-block;transform:scaleX(1.0850);transform-origin:0 50%;">CUST-61730</span></div>
<div class="cell" style="left:311.2px;top:474.80px;width:93.3px;font-size:12.4px;"><span style="display:inline-block;transform:scaleX(0.9685);transform-origin:0 50%;">付箋</span></div>
<div class="cell" style="left:406.7px;top:474.80px;width:93.3px;font-size:12.4px;"><span style="display:inline-block;transform:scaleX(0.9685);transform-origin:0 50%;">文具</span></div>
<div class="cell num" style="left:500.5px;top:474.80px;width:93.9px;letter-spacing:0.38px">288</div>
<div class="cell num" style="left:596.0px;top:474.80px;width:93.9px;letter-spacing:0.38px">39</div>
<div class="cell num" style="left:691.5px;top:474.80px;width:93.9px;letter-spacing:0.38px">11232</div>
<div class="cell" style="left:789.1px;top:474.80px;width:92.9px;font-size:12.4px;"><span style="display:inline-block;transform:scaleX(0.7586);transform-origin:0 50%;">クレジット</span></div>
<div class="cell" style="left:884.2px;top:474.80px;width:93.3px;font-size:12.4px;"><span style="display:inline-block;transform:scaleX(0.9685);transform-origin:0 50%;">中村</span></div>
<div class="cell" style="left:24.4px;top:489.40px;width:93.6px;font-size:11px;"><span style="display:inline-block;transform:scaleX(1.1016);transform-origin:0 50%;">2025-01-01</span></div>
<div class="cell" style="left:119.9px;top:489.40px;width:93.6px;font-size:11px;"><span style="display:inline-block;transform:scaleX(1.0962);transform-origin:0 50%;">ORD-2025-14277</span></div>
<div class="cell" style="left:215.4px;top:489.40px;width:93.6px;font-size:11px;"><span style="display:inline-block;transform:scaleX(1.0850);transform-origin:0 50%;">CUST-26648</span></div>
<div class="cell" style="left:310.2px;top:489.40px;width:94.3px;font-size:12.4px;"><span style="display:inline-block;transform:scaleX(0.8491);transform-origin:0 50%;">USBメモリ</span></div>
<div class="cell" style="left:406.7px;top:489.40px;width:93.3px;font-size:12.4px;"><span style="display:inline-block;transform:scaleX(0.9685);transform-origin:0 50%;">電子機器</span></div>
<div class="cell num" style="left:500.5px;top:489.40px;width:93.9px;letter-spacing:0.38px">1011</div>
<div class="cell num" style="left:596.0px;top:489.40px;width:93.9px;letter-spacing:0.38px">27</div>
<div class="cell num" style="left:691.5px;top:489.40px;width:93.9px;letter-spacing:0.38px">27297</div>
<div class="cell" style="left:789.1px;top:489.40px;width:92.9px;font-size:12.4px;"><span style="display:inline-block;transform:scaleX(0.7586);transform-origin:0 50%;">クレジット</span></div>
<div class="cell" style="left:884.2px;top:489.40px;width:93.3px;font-size:12.4px;"><span style="display:inline-block;transform:scaleX(0.9685);transform-origin:0 50%;">中村</span></div>
<div class="cell" style="left:24.4px;top:504.00px;width:93.6px;font-size:11px;"><span style="display:inline-block;transform:scaleX(1.1016);transform-origin:0 50%;">2025-01-01</span></div>
<div class="cell" style="left:119.9px;top:504.00px;width:93.6px;font-size:11px;"><span style="display:inline-block;transform:scaleX(1.0962);transform-origin:0 50%;">ORD-2025-77946</span></div>
<div class="cell" style="left:215.4px;top:504.00px;width:93.6px;font-size:11px;"><span style="display:inline-block;transform:scaleX(1.0850);transform-origin:0 50%;">CUST-78214</span></div>
<div class="cell" style="left:311.2px;top:504.00px;width:93.3px;font-size:12.4px;"><span style="display:inline-block;transform:scaleX(0.9685);transform-origin:0 50%;">電卓</span></div>
<div class="cell" style="left:406.7px;top:504.00px;width:93.3px;font-size:12.4px;"><span style="display:inline-block;transform:scaleX(0.9685);transform-origin:0 50%;">電子機器</span></div>
<div class="cell num" style="left:500.5px;top:504.00px;width:93.9px;letter-spacing:0.38px">1502</div>
<div class="cell num" style="left:596.0px;top:504.00px;width:93.9px;letter-spacing:0.38px">43</div>
<div class="cell num" style="left:691.5px;top:504.00px;width:93.9px;letter-spacing:0.38px">64586</div>
<div class="cell" style="left:788.7px;top:504.00px;width:93.3px;font-size:12.4px;"><span style="display:inline-block;transform:scaleX(0.9631);transform-origin:0 50%;">請求書</span></div>
<div class="cell" style="left:884.2px;top:504.00px;width:93.3px;font-size:12.4px;"><span style="display:inline-block;transform:scaleX(0.9685);transform-origin:0 50%;">渡辺</span></div>
<div class="cell" style="left:24.4px;top:518.59px;width:93.6px;font-size:11px;"><span style="display:inline-block;transform:scaleX(1.1016);transform-origin:0 50%;">2025-01-01</span></div>
<div class="cell" style="left:119.9px;top:518.59px;width:93.6px;font-size:11px;"><span style="display:inline-block;transform:scaleX(1.0962);transform-origin:0 50%;">ORD-2025-79198</span></div>
<div class="cell" style="left:215.4px;top:518.59px;width:93.6px;font-size:11px;"><span style="display:inline-block;transform:scaleX(1.0850);transform-origin:0 50%;">CUST-61298</span></div>
<div class="cell" style="left:309.4px;top:518.59px;width:95.1px;font-size:12.4px;"><span style="display:inline-block;transform:scaleX(0.8001);transform-origin:0 50%;">プリンタトナー</span></div>
<div class="cell" style="left:406.7px;top:518.59px;width:93.3px;font-size:12.4px;"><span style="display:inline-block;transform:scaleX(0.9577);transform-origin:0 50%;">消耗品</span></div>
<div class="cell num" style="left:500.5px;top:518.59px;width:93.9px;letter-spacing:0.38px">7821</div>
<div class="cell num" style="left:596.0px;top:518.59px;width:93.9px;letter-spacing:0.38px">68</div>
<div class="cell num" style="left:691.5px;top:518.59px;width:93.9px;letter-spacing:0.38px">531828</div>
<div class="cell" style="left:789.1px;top:518.59px;width:92.9px;font-size:12.4px;"><span style="display:inline-block;transform:scaleX(0.7586);transform-origin:0 50%;">クレジット</span></div>
<div class="cell" style="left:884.2px;top:518.59px;width:93.3px;font-size:12.4px;"><span style="display:inline-block;transform:scaleX(0.9685);transform-origin:0 50%;">高橋</span></div>
<div class="cell" style="left:24.4px;top:533.18px;width:93.6px;font-size:11px;"><span style="display:inline-block;transform:scaleX(1.1016);transform-origin:0 50%;">2025-01-01</span></div>
<div class="cell" style="left:119.9px;top:533.18px;width:93.6px;font-size:11px;"><span style="display:inline-block;transform:scaleX(1.0962);transform-origin:0 50%;">ORD-2025-74847</span></div>
<div class="cell" style="left:215.4px;top:533.18px;width:93.6px;font-size:11px;"><span style="display:inline-block;transform:scaleX(1.0850);transform-origin:0 50%;">CUST-58934</span></div>
<div class="cell" style="left:309.4px;top:533.18px;width:95.1px;font-size:12.4px;"><span style="display:inline-block;transform:scaleX(0.8817);transform-origin:0 50%;">マーカー</span></div>
<div class="cell" style="left:406.7px;top:533.18px;width:93.3px;font-size:12.4px;"><span style="display:inline-block;transform:scaleX(0.9685);transform-origin:0 50%;">文具</span></div>
<div class="cell num" style="left:500.5px;top:533.18px;width:93.9px;letter-spacing:0.38px">175</div>
<div class="cell num" style="left:596.0px;top:533.18px;width:93.9px;letter-spacing:0.38px">79</div>
<div class="cell num" style="left:691.5px;top:533.18px;width:93.9px;letter-spacing:0.38px">13825</div>
<div class="cell" style="left:789.1px;top:533.18px;width:92.9px;font-size:12.4px;"><span style="display:inline-block;transform:scaleX(0.7586);transform-origin:0 50%;">クレジット</span></div>
<div class="cell" style="left:884.2px;top:533.18px;width:93.3px;font-size:12.4px;"><span style="display:inline-block;transform:scaleX(0.9685);transform-origin:0 50%;">渡辺</span></div>
<svg style="left:0;top:0" width="200" height="420" viewBox="0 0 200 420"><rect x="23" y="385.54" width="95.10" height="14.79" fill="none" stroke="#1e7c47" stroke-width="1.6"/><rect x="115.50" y="397.93" width="5.2" height="5.2" fill="#fff"/><rect x="116.10" y="398.53" width="4.4" height="4.4" fill="#1e7c47"/></svg>
<div class="a" style="left:0;top:539px;width:1024px;height:44px;background:#505050"></div>
<div class="a" style="left:93.8px;top:538px;width:36.2px;height:24.2px;background:#fff;border-radius:0 0 4.5px 4.5px"></div>
<svg style="left:89.8px;top:539px" width="4" height="4" viewBox="0 0 4 4"><path d="M0 0 H4 V4 Q4 0 0 0 Z" fill="#fff"/></svg>
<svg style="left:130px;top:539px" width="4" height="4" viewBox="0 0 4 4"><path d="M4 0 H0 V4 Q0 0 4 0 Z" fill="#fff"/></svg>
<div class="t " style="left:101.4px;top:545.30px;font-size:10.6px;color:#2a2a2a;transform:scaleX(1.0195);transform-origin:0 50%;">売上</div>
<div class="a" style="left:101px;top:557.6px;width:22.2px;height:1.6px;background:#1e8a4a;border-radius:1px"></div>
<div class="a" style="left:133px;top:545px;width:1px;height:13.4px;background:#8c8c8c"></div>
<svg style="left:22.6px;top:547.4px" width="6" height="9" viewBox="0 0 6 9"><path d="M5 0.6 L1 4.5 L5 8.4" fill="none" stroke="#8e8e8e" stroke-width="1.1" stroke-linecap="round" stroke-linejoin="round"/></svg>
<svg style="left:49px;top:547.4px" width="6" height="9" viewBox="0 0 6 9"><path d="M1 0.6 L5 4.5 L1 8.4" fill="none" stroke="#8e8e8e" stroke-width="1.1" stroke-linecap="round" stroke-linejoin="round"/></svg>
<svg style="left:167.6px;top:547.4px" width="9" height="9" viewBox="0 0 9 9"><path d="M4.5 0.4 V8.6 M0.4 4.5 H8.6" fill="none" stroke="#b4b4b4" stroke-width="1.1"/></svg>
<div class="a" style="left:664.4px;top:549.6px;width:1.6px;height:1.6px;background:#dcdcdc"></div>
<div class="a" style="left:664.4px;top:552.8px;width:1.6px;height:1.6px;background:#dcdcdc"></div>
<div class="a" style="left:664.4px;top:556px;width:1.6px;height:1.6px;background:#dcdcdc"></div>
<div class="a" style="left:678.6px;top:545px;width:380px;height:13.6px;background:#3a3a3a;border-radius:6.8px"></div>
<svg style="left:682.6px;top:548.6px" width="5.4" height="6.8" viewBox="0 0 5.4 6.8"><path d="M5.4 0 V6.8 L0 3.4 Z" fill="#d8d8d8"/></svg>
<div class="a" style="left:691.6px;top:548.2px;width:380px;height:7.6px;background:#c6c4c4;border-radius:3.8px"></div>
<div class="a" style="left:0;top:564.4px;width:1024px;height:1px;background:#3c3c3c"></div>
<div class="t " style="left:8.8px;top:569.80px;font-size:9.6px;color:#f0f0f0;transform:scaleX(0.9954);transform-origin:0 50%;">準備完了</div>
<svg style="left:64.4px;top:569.6px" width="11" height="10.4" viewBox="0 0 11 10.4" fill="none" stroke="#ececec" stroke-width="0.9"><rect x="0.5" y="0.5" width="10" height="9.4"/><path d="M0.5 3 H10.5 M2.4 5.2 H6 M2.4 7.4 H5"/><circle cx="7.8" cy="7" r="1.9"/></svg>
<svg style="left:89.8px;top:569px" width="12" height="11.4" viewBox="0 0 12 11.4" fill="none" stroke="#ececec" stroke-width="0.9" stroke-linecap="round" stroke-linejoin="round"><circle cx="4.6" cy="1.6" r="1.1"/><path d="M0.8 3.6 H8.4 M4.6 3.6 V6.6 M4.6 6.6 L2.2 10.6 M4.6 6.6 L6 8.6"/><path d="M7 8.4 L8.6 10 L11.4 6.6"/></svg>
<div class="t " style="left:104px;top:569.80px;font-size:9.6px;color:#f0f0f0;transform:scaleX(0.8113);transform-origin:0 50%;">アクセシビリティ: 問題ありません</div>
<div class="a" style="left:858px;top:565.4px;width:32.4px;height:18px;background:#626262"></div>
<svg style="left:868.4px;top:568.2px" width="10.4" height="10.4" viewBox="0 0 10.4 10.4" fill="none" stroke="#f0f0f0" stroke-width="0.9"><rect x="0.5" y="0.5" width="9.4" height="9.4"/><path d="M3.6 0.5 V9.9 M6.8 0.5 V9.9 M0.5 3.6 H9.9 M0.5 6.8 H9.9"/></svg>
<svg style="left:901px;top:568.2px" width="11.2" height="10.4" viewBox="0 0 11.2 10.4" fill="none" stroke="#f0f0f0" stroke-width="0.9"><rect x="0.5" y="0.5" width="10.2" height="9.4"/><rect x="3" y="2.8" width="5.2" height="4.8"/><path d="M4.2 5.2 H7"/></svg>
<svg style="left:933px;top:568.2px" width="11.6" height="10.4" viewBox="0 0 11.6 10.4" fill="none" stroke="#f0f0f0" stroke-width="0.9"><path d="M0.5 0.5 H11.1 V9.9 H0.5 Z"/><path d="M3.8 0.5 V4.6 M7 0.5 V4.6 M0.5 4.8 H7"/></svg>
<div class="a" style="left:960px;top:573px;width:6.6px;height:1px;background:#e8e8e8"></div>
<div class="a" style="left:970.8px;top:573.6px;width:60px;height:1px;background:#b8b8b8"></div>
<div class="a" style="left:1009px;top:569.8px;width:4.6px;height:9.2px;background:#d4d4d4;border-radius:1px"></div>
</body></html>
